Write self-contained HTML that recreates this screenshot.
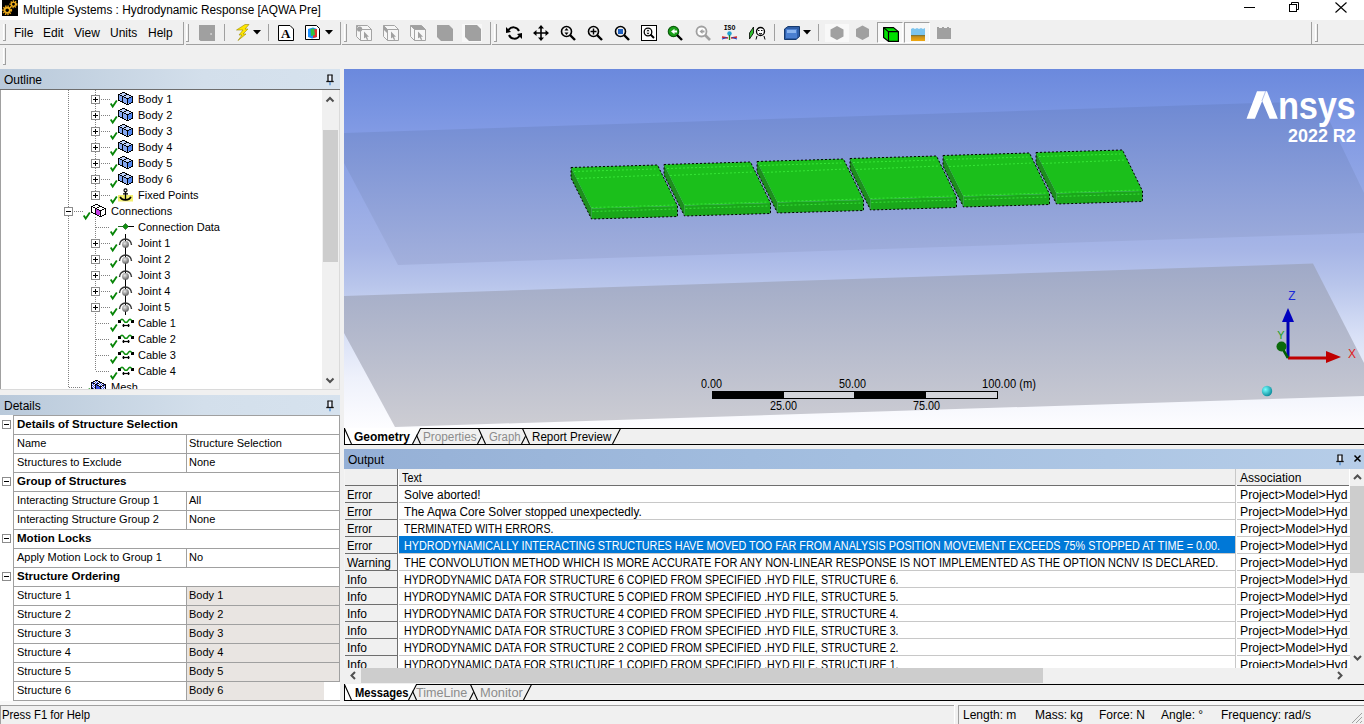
<!DOCTYPE html>
<html><head><meta charset="utf-8"><style>
*{margin:0;padding:0;box-sizing:border-box}
html,body{width:1364px;height:724px;overflow:hidden;background:#f0f0f0;font-family:"Liberation Sans",sans-serif;color:#000;position:relative}
.a{position:absolute}
.t{position:absolute;white-space:nowrap;line-height:1}
.s12{font-size:12px}
.s11{font-size:11px}
.b{font-weight:bold}
svg{position:absolute;overflow:visible}
</style></head><body>
<div class="a" style="left:0px;top:0px;width:1364px;height:20px;background:#fff"></div>
<svg style="left:2px;top:0px;" width="16" height="16" viewBox="0 0 16 16"><rect width="16" height="16" fill="#000"/><circle cx="5.2" cy="10.2" r="3.6" fill="none" stroke="#e8a317" stroke-width="2.70" stroke-dasharray="1.2 0.9"/><circle cx="5.2" cy="10.2" r="2.59" fill="none" stroke="#f0b020" stroke-width="1.62"/><circle cx="11.5" cy="4.3" r="2.9" fill="none" stroke="#e8a317" stroke-width="2.17" stroke-dasharray="1.2 0.9"/><circle cx="11.5" cy="4.3" r="2.09" fill="none" stroke="#f0b020" stroke-width="1.30"/></svg>
<div class="t" style="left:23px;top:4px;font-size:12px;color:#000;transform:scaleX(0.985);transform-origin:0 0">Multiple Systems : Hydrodynamic Response [AQWA Pre]</div>
<div class="a" style="left:1244px;top:7px;width:11px;height:1px;background:#000"></div>
<svg style="left:1289px;top:2px;" width="11" height="10" viewBox="0 0 11 10"><rect x="0.5" y="2.5" width="7" height="7" fill="none" stroke="#000"/><path d="M2.5 2.5V0.5H9.5V7.5H7.5" fill="none" stroke="#000"/></svg>
<svg style="left:1335px;top:2px;" width="12" height="11" viewBox="0 0 12 11"><path d="M0.5 0.5L11.5 10.5M11.5 0.5L0.5 10.5" stroke="#000" stroke-width="1.1"/></svg>
<div class="a" style="left:0px;top:20px;width:1364px;height:48px;background:#f0f0f0"></div>
<div class="a" style="left:0px;top:44px;width:183px;height:1px;background:#a0a0a0"></div>
<div class="a" style="left:186px;top:44px;width:155px;height:1px;background:#a0a0a0"></div>
<div class="a" style="left:342px;top:44px;width:149px;height:1px;background:#a0a0a0"></div>
<div class="a" style="left:492px;top:44px;width:819px;height:1px;background:#a0a0a0"></div>
<div class="a" style="left:1312px;top:44px;width:52px;height:1px;background:#a0a0a0"></div>
<div class="a" style="left:183px;top:22px;width:1px;height:23px;background:#a0a0a0"></div>
<div class="a" style="left:340px;top:22px;width:1px;height:23px;background:#a0a0a0"></div>
<div class="a" style="left:490px;top:22px;width:1px;height:23px;background:#a0a0a0"></div>
<div class="a" style="left:1311px;top:22px;width:1px;height:23px;background:#a0a0a0"></div>
<div class="a" style="left:3px;top:24px;width:1px;height:17px;background:#fff"></div>
<div class="a" style="left:5px;top:24px;width:1px;height:17px;background:#a0a0a0"></div>
<div class="a" style="left:3px;top:40px;width:3px;height:1px;background:#a0a0a0"></div>
<div class="a" style="left:186px;top:24px;width:1px;height:18px;background:#fff"></div>
<div class="a" style="left:188px;top:24px;width:1px;height:18px;background:#a0a0a0"></div>
<div class="a" style="left:186px;top:41px;width:3px;height:1px;background:#a0a0a0"></div>
<div class="a" style="left:344px;top:24px;width:1px;height:18px;background:#fff"></div>
<div class="a" style="left:346px;top:24px;width:1px;height:18px;background:#a0a0a0"></div>
<div class="a" style="left:344px;top:41px;width:3px;height:1px;background:#a0a0a0"></div>
<div class="a" style="left:494px;top:24px;width:1px;height:18px;background:#fff"></div>
<div class="a" style="left:496px;top:24px;width:1px;height:18px;background:#a0a0a0"></div>
<div class="a" style="left:494px;top:41px;width:3px;height:1px;background:#a0a0a0"></div>
<div class="a" style="left:1315px;top:24px;width:1px;height:18px;background:#fff"></div>
<div class="a" style="left:1317px;top:24px;width:1px;height:18px;background:#a0a0a0"></div>
<div class="a" style="left:1315px;top:41px;width:3px;height:1px;background:#a0a0a0"></div>
<div class="t" style="left:14px;top:27px;font-size:12px;">File</div>
<div class="t" style="left:43px;top:27px;font-size:12px;">Edit</div>
<div class="t" style="left:74px;top:27px;font-size:12px;">View</div>
<div class="t" style="left:110px;top:27px;font-size:12px;">Units</div>
<div class="t" style="left:148px;top:27px;font-size:12px;">Help</div>
<svg style="left:199px;top:25px;" width="16" height="16" viewBox="0 0 16 16"><path d="M0 0H16V16H1.5L0 14.5Z" fill="#a0a0a0"/><path d="M11 9l1.5-1v2z" fill="#fff"/></svg>
<div class="a" style="left:224px;top:24px;width:1px;height:17px;background:#a0a0a0"></div>
<svg style="left:236px;top:24px;" width="14" height="17" viewBox="0 0 14 17"><path d="M9 0.5L13 0.5L9 5L12 5L7 10L10 10L2 16.5L6 11L3 11L7 6L0.5 6Z" fill="#ffe600" stroke="#9a8a00" stroke-width="0.6"/></svg>
<svg style="left:253px;top:30px;" width="8" height="5" viewBox="0 0 8 5"><path d="M0 0H8L4 4.5Z" fill="#000"/></svg>
<div class="a" style="left:268px;top:24px;width:1px;height:17px;background:#a0a0a0"></div>
<svg style="left:278px;top:25px;" width="16" height="16" viewBox="0 0 16 16"><path d="M0.5 0.5H12L15.5 4V15.5H0.5Z" fill="#fff" stroke="#000"/><text x="7.8" y="13" font-family="Liberation Serif" font-size="13" text-anchor="middle" fill="#000" font-weight="bold">A</text></svg>
<svg style="left:305px;top:25px;" width="15" height="15" viewBox="0 0 15 15"><path d="M0.5 0.5H11.5L14.5 3.5V14.5H0.5Z" fill="#fff" stroke="#000"/><path d="M3 4L8 2.5L12 4V12L7 13.5L3 12Z" fill="#1e90ff"/><path d="M8 4.5L12 4V12L8 13Z" fill="#e03030"/><path d="M5.5 4L9 3.2L10 10L6 11Z" fill="#30c040"/></svg>
<svg style="left:325px;top:30px;" width="8" height="5" viewBox="0 0 8 5"><path d="M0 0H8L4 4.5Z" fill="#000"/></svg>
<svg style="left:356px;top:25px;" width="17" height="17" viewBox="0 0 17 17"><path d="M0.5 0.5H11.5L15.5 4.5V15.5H4.5L0.5 11.5Z" fill="#f6f6f6" stroke="#a4a4a4"/><circle cx="3.6" cy="4" r="2.6" fill="#a0a0a0"/><path d="M0.5 0.5L4.5 4.5H15.5M4.5 4.5V15.5" fill="none" stroke="#a4a4a4"/><path d="M8 6.5V13.5L9.6 12.2L11 15L12.2 14.4L10.9 11.7H13Z" fill="#a0a0a0"/></svg>
<svg style="left:383px;top:25px;" width="17" height="17" viewBox="0 0 17 17"><path d="M0.5 0.5H11.5L15.5 4.5V15.5H4.5L0.5 11.5Z" fill="#f6f6f6" stroke="#a4a4a4"/><path d="M0.5 0.5L4.5 4.5V8.5L0.5 4.5Z" fill="#a0a0a0"/><path d="M0.5 0.5L4.5 4.5H15.5M4.5 4.5V15.5" fill="none" stroke="#a4a4a4"/><path d="M8 6.5V13.5L9.6 12.2L11 15L12.2 14.4L10.9 11.7H13Z" fill="#a0a0a0"/></svg>
<svg style="left:410px;top:25px;" width="17" height="17" viewBox="0 0 17 17"><path d="M0.5 0.5H11.5L15.5 4.5V15.5H4.5L0.5 11.5Z" fill="#f6f6f6" stroke="#a4a4a4"/><path d="M0.5 0.5H11.5L15.5 4.5H4.5Z" fill="#a0a0a0"/><path d="M0.5 0.5L4.5 4.5H15.5M4.5 4.5V15.5" fill="none" stroke="#a4a4a4"/><path d="M8 6.5V13.5L9.6 12.2L11 15L12.2 14.4L10.9 11.7H13Z" fill="#a0a0a0"/></svg>
<svg style="left:437px;top:25px;" width="16" height="16" viewBox="0 0 16 16"><path d="M0 0H12L16 4V16H4L0 12Z" fill="#a0a0a0"/></svg>
<svg style="left:462px;top:24px;" width="20" height="18" viewBox="0 0 20 18"><rect width="20" height="18" fill="#f8f8f8"/><path d="M3 1H15L19 5V17H7L3 13Z" fill="#a0a0a0"/></svg>
<svg style="left:506px;top:25px;" width="16" height="16" viewBox="0 0 16 16"><path d="M13 6A6 6 0 0 0 2.5 5" fill="none" stroke="#000" stroke-width="2"/><path d="M0 2L5 7L0 8Z" fill="#000"/><path d="M3 10A6 6 0 0 0 13.5 11" fill="none" stroke="#000" stroke-width="2"/><path d="M16 14L11 9L16 8Z" fill="#000"/></svg>
<svg style="left:533px;top:25px;" width="16" height="16" viewBox="0 0 16 16"><path d="M8 1V15M1 8H15" stroke="#000" stroke-width="1.6"/><path d="M8 0L11 3.5H5ZM8 16L11 12.5H5ZM0 8L3.5 5V11ZM16 8L12.5 5V11Z" fill="#000"/></svg>
<svg style="left:560px;top:25px;" width="16" height="16" viewBox="0 0 16 16"><circle cx="6.5" cy="6.5" r="5" fill="none" stroke="#000" stroke-width="1.6"/><path d="M10 10L15 15" stroke="#000" stroke-width="2.4"/><path d="M6.5 3L8.5 5.5H4.5ZM6.5 10L8.5 7.5H4.5Z" fill="#000"/></svg>
<svg style="left:587px;top:25px;" width="16" height="16" viewBox="0 0 16 16"><circle cx="6.5" cy="6.5" r="5" fill="none" stroke="#000" stroke-width="1.6"/><path d="M10 10L15 15" stroke="#000" stroke-width="2.4"/><path d="M6.5 3.5V9.5M3.5 6.5H9.5" stroke="#000" stroke-width="1.4"/></svg>
<svg style="left:614px;top:25px;" width="16" height="16" viewBox="0 0 16 16"><circle cx="6.5" cy="6.5" r="5" fill="none" stroke="#000" stroke-width="1.6"/><path d="M10 10L15 15" stroke="#000" stroke-width="2.4"/><rect x="4" y="4" width="5" height="5" fill="#1e5fbf"/></svg>
<svg style="left:641px;top:25px;" width="16" height="16" viewBox="0 0 16 16"><rect x="0.5" y="0.5" width="15" height="15" fill="#fff" stroke="#000"/><circle cx="7" cy="7" r="3.8" fill="none" stroke="#000" stroke-width="1.3"/><path d="M9.5 9.5L13 13" stroke="#000" stroke-width="2"/><path d="M7 4.5L8.5 6.3H5.5ZM7 9.5L8.5 7.7H5.5Z" fill="#000"/></svg>
<svg style="left:667px;top:25px;" width="17" height="16" viewBox="0 0 17 16"><circle cx="6.5" cy="6.5" r="5.2" fill="#1aa01a" stroke="#0b5e0b" stroke-width="1.2"/><path d="M4 6.5L7.5 3.8V9.2Z M7 5.5H10V7.5H7Z" fill="#fff"/><path d="M10 10L15 15" stroke="#000" stroke-width="2.4"/></svg>
<svg style="left:695px;top:25px;" width="16" height="16" viewBox="0 0 16 16"><circle cx="6.5" cy="6.5" r="5" fill="#fff" stroke="#a0a0a0" stroke-width="1.8"/><path d="M10 10L15 15" stroke="#a0a0a0" stroke-width="2.6"/><path d="M4.5 6.5L7.5 4V9Z M7 5.5H9.5V7.5H7Z" fill="#a0a0a0"/></svg>
<svg style="left:721px;top:24px;" width="17" height="17" viewBox="0 0 17 17"><text x="8.5" y="6" font-family="Liberation Mono" font-size="6.5" font-weight="bold" text-anchor="middle" fill="#000">ISO</text><circle cx="8.5" cy="9.5" r="2.2" fill="#20a0d0"/><path d="M8.5 11V16" stroke="#208020" stroke-width="1.3"/><path d="M1 13L7 14M16 13L10 14" stroke="#d02020" stroke-width="1.3"/><path d="M1 15L6 13.5M16 15L11 13.5" stroke="#2040c0" stroke-width="1.1"/></svg>
<svg style="left:749px;top:26px;" width="17" height="14" viewBox="0 0 17 14"><path d="M0.5 13L0.5 7L4.5 1V7Z" fill="#30c030" stroke="#000" stroke-width="0.8"/><circle cx="11.5" cy="5.5" r="4" fill="#fff" stroke="#000" stroke-width="1.3"/><path d="M9 4.5h1.5M12 4.5h1.5M10 7.5q1.5 1 3 0M8 10L7 13.5M15 10L16 13.5" stroke="#000" stroke-width="1"/></svg>
<div class="a" style="left:774px;top:24px;width:1px;height:17px;background:#a0a0a0"></div>
<svg style="left:784px;top:26px;" width="16" height="14" viewBox="0 0 16 14"><path d="M0.5 3L4 0.5H15.5V10.5L12 13.5H0.5Z" fill="#2f5ea8" stroke="#153a70"/><path d="M2 3H13V12H2Z" fill="#4a7fd0"/><path d="M3 4H12V7H3Z" fill="#8ab4ee"/></svg>
<svg style="left:803px;top:30px;" width="8" height="5" viewBox="0 0 8 5"><path d="M0 0H8L4 4.5Z" fill="#000"/></svg>
<div class="a" style="left:818px;top:24px;width:1px;height:17px;background:#a0a0a0"></div>
<svg style="left:825px;top:24px;" width="24" height="18" viewBox="0 0 24 18"><rect width="24" height="18" fill="#f8f8f8"/><path d="M12 2L18.5 5.5V12.5L12 16L5.5 12.5V5.5Z" fill="#a0a0a0"/></svg>
<svg style="left:854px;top:24px;" width="17" height="18" viewBox="0 0 17 18"><path d="M8.5 1.5L15 5V12.5L8.5 16L2 12.5V5Z" fill="#a0a0a0"/></svg>
<div class="a" style="left:877px;top:22px;width:26px;height:21px;background:#f7f7f7;border:1px solid #a0a0a0;border-right-color:#fff;border-bottom-color:#fff"></div>
<svg style="left:883px;top:26px;" width="16" height="16" viewBox="0 0 16 16"><path d="M0.6 1.6H10.5L15.4 5.6V15.4H5.5L0.6 11.5Z" fill="#00e000" stroke="#000" stroke-width="1.2" stroke-linejoin="round"/><path d="M0.6 1.6L5.5 5.6H15.4M5.5 5.6V15.4" fill="none" stroke="#000" stroke-width="1.2"/></svg>
<div class="a" style="left:904px;top:22px;width:26px;height:21px;background:#f7f7f7;border:1px solid #a0a0a0;border-right-color:#fff;border-bottom-color:#fff"></div>
<svg style="left:911px;top:28px;" width="14" height="13" viewBox="0 0 14 13"><defs><linearGradient id="wg" x1="0" y1="0" x2="0" y2="1"><stop offset="0" stop-color="#6a6a3a"/><stop offset="0.3" stop-color="#c8901a"/><stop offset="1" stop-color="#f0a810"/></linearGradient></defs><path d="M0 1L2 0L4 1L6 0L8 1L10 0L12 1L14 0V7H0Z" fill="#7cc4ee"/><rect y="7" width="14" height="6" fill="url(#wg)"/></svg>
<svg style="left:937px;top:27px;" width="14" height="13" viewBox="0 0 14 13"><path d="M0 0H2V1H5V0H7V1H10V0H12V1H14V12H0Z" fill="#a0a0a0"/></svg>
<div class="a" style="left:3px;top:48px;width:1px;height:17px;background:#fff"></div>
<div class="a" style="left:5px;top:48px;width:1px;height:17px;background:#a0a0a0"></div>
<div class="a" style="left:3px;top:64px;width:3px;height:1px;background:#a0a0a0"></div>
<div class="a" style="left:0px;top:68px;width:1364px;height:1px;background:#f0f0f0"></div>
<div class="a" style="left:0px;top:69px;width:340px;height:20px;background:linear-gradient(to right,#b9c9da,#d3dfeb 60%,#d6e2ee)"></div>
<div class="t" style="left:4px;top:74px;font-size:12px;">Outline</div>
<svg style="left:326px;top:74px;" width="8" height="12" viewBox="0 0 8 12"><rect x="2" y="1" width="4" height="6" fill="#eef4ff"/><path d="M2 0.8V7M6 0.8V7" stroke="#111" stroke-width="1.3"/><path d="M1.5 1H6.5" stroke="#111" stroke-width="1"/><path d="M0.3 7.5H7.7" stroke="#111" stroke-width="1.3"/><path d="M4 8V11.2" stroke="#4a8ad0" stroke-width="1.3"/></svg>
<div class="a" style="left:0px;top:89px;width:340px;height:1px;background:#6e6e6e"></div>
<div class="a" style="left:0px;top:90px;width:340px;height:300px;background:#fff"></div>
<div class="a" style="left:0px;top:90px;width:1px;height:300px;background:#a0a0a0"></div>
<div class="a" style="left:0px;top:389px;width:340px;height:1px;background:#dadada"></div>
<div class="a" style="left:339px;top:90px;width:1px;height:300px;background:#dadada"></div>
<div class="a" style="left:322px;top:90px;width:17px;height:299px;background:#f0f0f0"></div>
<div class="a" style="left:323px;top:130px;width:15px;height:132px;background:#cdcdcd"></div>
<svg style="left:325px;top:96px;" width="10" height="7" viewBox="0 0 10 7"><path d="M1.5 5.5L5 2L8.5 5.5" fill="none" stroke="#505050" stroke-width="2"/></svg>
<svg style="left:325px;top:377px;" width="10" height="7" viewBox="0 0 10 7"><path d="M1.5 1.5L5 5L8.5 1.5" fill="none" stroke="#505050" stroke-width="2"/></svg>
<div class="a" style="left:1px;top:90px;width:321px;height:299px;overflow:hidden">
<div class="a" style="left:67px;top:0px;width:1px;height:298px;background:repeating-linear-gradient(to bottom,#808080 0 1px,transparent 1px 2px)"></div>
<div class="a" style="left:94px;top:0px;width:1px;height:105px;background:repeating-linear-gradient(to bottom,#808080 0 1px,transparent 1px 2px)"></div>
<div class="a" style="left:94px;top:127px;width:1px;height:154px;background:repeating-linear-gradient(to bottom,#808080 0 1px,transparent 1px 2px)"></div>
<svg style="left:124px;top:144px" width="1" height="81" viewBox="0 0 1 81"><rect width="1" height="81" fill="#000"/></svg>
<svg style="left:90px;top:5px" width="9" height="9" viewBox="0 0 9 9"><rect x="0.5" y="0.5" width="8" height="8" fill="#fff" stroke="#8c8c8c"/><path d="M2 4.5H7" stroke="#000"/><path d="M4.5 2V7" stroke="#000"/></svg>
<div class="a" style="left:100px;top:9px;width:9px;height:1px;background:repeating-linear-gradient(to right,#808080 0 1px,transparent 1px 2px)"></div>
<svg style="left:109px;top:10px" width="8" height="8" viewBox="0 0 8 8"><path d="M0.7 3.6L2.7 6.6L6.8 0.6" fill="none" stroke="#078507" stroke-width="1.8"/></svg>
<svg style="left:116px;top:1px" width="16" height="14" viewBox="0 0 16 14"><g shape-rendering="crispEdges"><rect x="5" y="1" width="3" height="1" fill="#000"/><rect x="3" y="2" width="2" height="1" fill="#000"/><rect x="5" y="2" width="3" height="1" fill="#bdd1fb"/><rect x="8" y="2" width="2" height="1" fill="#000"/><rect x="1" y="3" width="2" height="1" fill="#000"/><rect x="3" y="3" width="6" height="1" fill="#bdd1fb"/><rect x="9" y="3" width="3" height="1" fill="#000"/><rect x="1" y="4" width="1" height="1" fill="#000"/><rect x="2" y="4" width="1" height="1" fill="#87a9f3"/><rect x="3" y="4" width="2" height="1" fill="#000"/><rect x="5" y="4" width="2" height="1" fill="#bdd1fb"/><rect x="7" y="4" width="2" height="1" fill="#000"/><rect x="9" y="4" width="3" height="1" fill="#bdd1fb"/><rect x="12" y="4" width="2" height="1" fill="#000"/><rect x="1" y="5" width="1" height="1" fill="#000"/><rect x="2" y="5" width="3" height="1" fill="#87a9f3"/><rect x="5" y="5" width="2" height="1" fill="#000"/><rect x="7" y="5" width="7" height="1" fill="#bdd1fb"/><rect x="14" y="5" width="2" height="1" fill="#000"/><rect x="1" y="6" width="1" height="1" fill="#000"/><rect x="2" y="6" width="3" height="1" fill="#87a9f3"/><rect x="5" y="6" width="1" height="1" fill="#000"/><rect x="6" y="6" width="1" height="1" fill="#87a9f3"/><rect x="7" y="6" width="2" height="1" fill="#000"/><rect x="9" y="6" width="3" height="1" fill="#bdd1fb"/><rect x="12" y="6" width="2" height="1" fill="#000"/><rect x="14" y="6" width="1" height="1" fill="#5288f4"/><rect x="15" y="6" width="1" height="1" fill="#000"/><rect x="1" y="7" width="1" height="1" fill="#000"/><rect x="2" y="7" width="3" height="1" fill="#87a9f3"/><rect x="5" y="7" width="1" height="1" fill="#000"/><rect x="6" y="7" width="3" height="1" fill="#87a9f3"/><rect x="9" y="7" width="3" height="1" fill="#000"/><rect x="12" y="7" width="3" height="1" fill="#5288f4"/><rect x="15" y="7" width="1" height="1" fill="#000"/><rect x="1" y="8" width="1" height="1" fill="#000"/><rect x="2" y="8" width="3" height="1" fill="#87a9f3"/><rect x="5" y="8" width="1" height="1" fill="#000"/><rect x="6" y="8" width="4" height="1" fill="#87a9f3"/><rect x="10" y="8" width="1" height="1" fill="#000"/><rect x="11" y="8" width="4" height="1" fill="#5288f4"/><rect x="15" y="8" width="1" height="1" fill="#000"/><rect x="1" y="9" width="2" height="1" fill="#000"/><rect x="3" y="9" width="2" height="1" fill="#87a9f3"/><rect x="5" y="9" width="1" height="1" fill="#000"/><rect x="6" y="9" width="4" height="1" fill="#87a9f3"/><rect x="10" y="9" width="1" height="1" fill="#000"/><rect x="11" y="9" width="4" height="1" fill="#5288f4"/><rect x="15" y="9" width="1" height="1" fill="#000"/><rect x="3" y="10" width="3" height="1" fill="#000"/><rect x="6" y="10" width="4" height="1" fill="#87a9f3"/><rect x="10" y="10" width="1" height="1" fill="#000"/><rect x="11" y="10" width="4" height="1" fill="#5288f4"/><rect x="15" y="10" width="1" height="1" fill="#000"/><rect x="5" y="11" width="2" height="1" fill="#000"/><rect x="7" y="11" width="3" height="1" fill="#87a9f3"/><rect x="10" y="11" width="1" height="1" fill="#000"/><rect x="11" y="11" width="3" height="1" fill="#5288f4"/><rect x="14" y="11" width="2" height="1" fill="#000"/><rect x="7" y="12" width="2" height="1" fill="#000"/><rect x="9" y="12" width="1" height="1" fill="#bdd1fb"/><rect x="10" y="12" width="1" height="1" fill="#000"/><rect x="11" y="12" width="1" height="1" fill="#bdd1fb"/><rect x="12" y="12" width="2" height="1" fill="#000"/><rect x="9" y="13" width="3" height="1" fill="#000"/></g></svg>
<div class="t" style="left:137px;top:4px;font-size:11px">Body 1</div>
<svg style="left:90px;top:21px" width="9" height="9" viewBox="0 0 9 9"><rect x="0.5" y="0.5" width="8" height="8" fill="#fff" stroke="#8c8c8c"/><path d="M2 4.5H7" stroke="#000"/><path d="M4.5 2V7" stroke="#000"/></svg>
<div class="a" style="left:100px;top:25px;width:9px;height:1px;background:repeating-linear-gradient(to right,#808080 0 1px,transparent 1px 2px)"></div>
<svg style="left:109px;top:26px" width="8" height="8" viewBox="0 0 8 8"><path d="M0.7 3.6L2.7 6.6L6.8 0.6" fill="none" stroke="#078507" stroke-width="1.8"/></svg>
<svg style="left:116px;top:17px" width="16" height="14" viewBox="0 0 16 14"><g shape-rendering="crispEdges"><rect x="5" y="1" width="3" height="1" fill="#000"/><rect x="3" y="2" width="2" height="1" fill="#000"/><rect x="5" y="2" width="3" height="1" fill="#bdd1fb"/><rect x="8" y="2" width="2" height="1" fill="#000"/><rect x="1" y="3" width="2" height="1" fill="#000"/><rect x="3" y="3" width="6" height="1" fill="#bdd1fb"/><rect x="9" y="3" width="3" height="1" fill="#000"/><rect x="1" y="4" width="1" height="1" fill="#000"/><rect x="2" y="4" width="1" height="1" fill="#87a9f3"/><rect x="3" y="4" width="2" height="1" fill="#000"/><rect x="5" y="4" width="2" height="1" fill="#bdd1fb"/><rect x="7" y="4" width="2" height="1" fill="#000"/><rect x="9" y="4" width="3" height="1" fill="#bdd1fb"/><rect x="12" y="4" width="2" height="1" fill="#000"/><rect x="1" y="5" width="1" height="1" fill="#000"/><rect x="2" y="5" width="3" height="1" fill="#87a9f3"/><rect x="5" y="5" width="2" height="1" fill="#000"/><rect x="7" y="5" width="7" height="1" fill="#bdd1fb"/><rect x="14" y="5" width="2" height="1" fill="#000"/><rect x="1" y="6" width="1" height="1" fill="#000"/><rect x="2" y="6" width="3" height="1" fill="#87a9f3"/><rect x="5" y="6" width="1" height="1" fill="#000"/><rect x="6" y="6" width="1" height="1" fill="#87a9f3"/><rect x="7" y="6" width="2" height="1" fill="#000"/><rect x="9" y="6" width="3" height="1" fill="#bdd1fb"/><rect x="12" y="6" width="2" height="1" fill="#000"/><rect x="14" y="6" width="1" height="1" fill="#5288f4"/><rect x="15" y="6" width="1" height="1" fill="#000"/><rect x="1" y="7" width="1" height="1" fill="#000"/><rect x="2" y="7" width="3" height="1" fill="#87a9f3"/><rect x="5" y="7" width="1" height="1" fill="#000"/><rect x="6" y="7" width="3" height="1" fill="#87a9f3"/><rect x="9" y="7" width="3" height="1" fill="#000"/><rect x="12" y="7" width="3" height="1" fill="#5288f4"/><rect x="15" y="7" width="1" height="1" fill="#000"/><rect x="1" y="8" width="1" height="1" fill="#000"/><rect x="2" y="8" width="3" height="1" fill="#87a9f3"/><rect x="5" y="8" width="1" height="1" fill="#000"/><rect x="6" y="8" width="4" height="1" fill="#87a9f3"/><rect x="10" y="8" width="1" height="1" fill="#000"/><rect x="11" y="8" width="4" height="1" fill="#5288f4"/><rect x="15" y="8" width="1" height="1" fill="#000"/><rect x="1" y="9" width="2" height="1" fill="#000"/><rect x="3" y="9" width="2" height="1" fill="#87a9f3"/><rect x="5" y="9" width="1" height="1" fill="#000"/><rect x="6" y="9" width="4" height="1" fill="#87a9f3"/><rect x="10" y="9" width="1" height="1" fill="#000"/><rect x="11" y="9" width="4" height="1" fill="#5288f4"/><rect x="15" y="9" width="1" height="1" fill="#000"/><rect x="3" y="10" width="3" height="1" fill="#000"/><rect x="6" y="10" width="4" height="1" fill="#87a9f3"/><rect x="10" y="10" width="1" height="1" fill="#000"/><rect x="11" y="10" width="4" height="1" fill="#5288f4"/><rect x="15" y="10" width="1" height="1" fill="#000"/><rect x="5" y="11" width="2" height="1" fill="#000"/><rect x="7" y="11" width="3" height="1" fill="#87a9f3"/><rect x="10" y="11" width="1" height="1" fill="#000"/><rect x="11" y="11" width="3" height="1" fill="#5288f4"/><rect x="14" y="11" width="2" height="1" fill="#000"/><rect x="7" y="12" width="2" height="1" fill="#000"/><rect x="9" y="12" width="1" height="1" fill="#bdd1fb"/><rect x="10" y="12" width="1" height="1" fill="#000"/><rect x="11" y="12" width="1" height="1" fill="#bdd1fb"/><rect x="12" y="12" width="2" height="1" fill="#000"/><rect x="9" y="13" width="3" height="1" fill="#000"/></g></svg>
<div class="t" style="left:137px;top:20px;font-size:11px">Body 2</div>
<svg style="left:90px;top:37px" width="9" height="9" viewBox="0 0 9 9"><rect x="0.5" y="0.5" width="8" height="8" fill="#fff" stroke="#8c8c8c"/><path d="M2 4.5H7" stroke="#000"/><path d="M4.5 2V7" stroke="#000"/></svg>
<div class="a" style="left:100px;top:41px;width:9px;height:1px;background:repeating-linear-gradient(to right,#808080 0 1px,transparent 1px 2px)"></div>
<svg style="left:109px;top:42px" width="8" height="8" viewBox="0 0 8 8"><path d="M0.7 3.6L2.7 6.6L6.8 0.6" fill="none" stroke="#078507" stroke-width="1.8"/></svg>
<svg style="left:116px;top:33px" width="16" height="14" viewBox="0 0 16 14"><g shape-rendering="crispEdges"><rect x="5" y="1" width="3" height="1" fill="#000"/><rect x="3" y="2" width="2" height="1" fill="#000"/><rect x="5" y="2" width="3" height="1" fill="#bdd1fb"/><rect x="8" y="2" width="2" height="1" fill="#000"/><rect x="1" y="3" width="2" height="1" fill="#000"/><rect x="3" y="3" width="6" height="1" fill="#bdd1fb"/><rect x="9" y="3" width="3" height="1" fill="#000"/><rect x="1" y="4" width="1" height="1" fill="#000"/><rect x="2" y="4" width="1" height="1" fill="#87a9f3"/><rect x="3" y="4" width="2" height="1" fill="#000"/><rect x="5" y="4" width="2" height="1" fill="#bdd1fb"/><rect x="7" y="4" width="2" height="1" fill="#000"/><rect x="9" y="4" width="3" height="1" fill="#bdd1fb"/><rect x="12" y="4" width="2" height="1" fill="#000"/><rect x="1" y="5" width="1" height="1" fill="#000"/><rect x="2" y="5" width="3" height="1" fill="#87a9f3"/><rect x="5" y="5" width="2" height="1" fill="#000"/><rect x="7" y="5" width="7" height="1" fill="#bdd1fb"/><rect x="14" y="5" width="2" height="1" fill="#000"/><rect x="1" y="6" width="1" height="1" fill="#000"/><rect x="2" y="6" width="3" height="1" fill="#87a9f3"/><rect x="5" y="6" width="1" height="1" fill="#000"/><rect x="6" y="6" width="1" height="1" fill="#87a9f3"/><rect x="7" y="6" width="2" height="1" fill="#000"/><rect x="9" y="6" width="3" height="1" fill="#bdd1fb"/><rect x="12" y="6" width="2" height="1" fill="#000"/><rect x="14" y="6" width="1" height="1" fill="#5288f4"/><rect x="15" y="6" width="1" height="1" fill="#000"/><rect x="1" y="7" width="1" height="1" fill="#000"/><rect x="2" y="7" width="3" height="1" fill="#87a9f3"/><rect x="5" y="7" width="1" height="1" fill="#000"/><rect x="6" y="7" width="3" height="1" fill="#87a9f3"/><rect x="9" y="7" width="3" height="1" fill="#000"/><rect x="12" y="7" width="3" height="1" fill="#5288f4"/><rect x="15" y="7" width="1" height="1" fill="#000"/><rect x="1" y="8" width="1" height="1" fill="#000"/><rect x="2" y="8" width="3" height="1" fill="#87a9f3"/><rect x="5" y="8" width="1" height="1" fill="#000"/><rect x="6" y="8" width="4" height="1" fill="#87a9f3"/><rect x="10" y="8" width="1" height="1" fill="#000"/><rect x="11" y="8" width="4" height="1" fill="#5288f4"/><rect x="15" y="8" width="1" height="1" fill="#000"/><rect x="1" y="9" width="2" height="1" fill="#000"/><rect x="3" y="9" width="2" height="1" fill="#87a9f3"/><rect x="5" y="9" width="1" height="1" fill="#000"/><rect x="6" y="9" width="4" height="1" fill="#87a9f3"/><rect x="10" y="9" width="1" height="1" fill="#000"/><rect x="11" y="9" width="4" height="1" fill="#5288f4"/><rect x="15" y="9" width="1" height="1" fill="#000"/><rect x="3" y="10" width="3" height="1" fill="#000"/><rect x="6" y="10" width="4" height="1" fill="#87a9f3"/><rect x="10" y="10" width="1" height="1" fill="#000"/><rect x="11" y="10" width="4" height="1" fill="#5288f4"/><rect x="15" y="10" width="1" height="1" fill="#000"/><rect x="5" y="11" width="2" height="1" fill="#000"/><rect x="7" y="11" width="3" height="1" fill="#87a9f3"/><rect x="10" y="11" width="1" height="1" fill="#000"/><rect x="11" y="11" width="3" height="1" fill="#5288f4"/><rect x="14" y="11" width="2" height="1" fill="#000"/><rect x="7" y="12" width="2" height="1" fill="#000"/><rect x="9" y="12" width="1" height="1" fill="#bdd1fb"/><rect x="10" y="12" width="1" height="1" fill="#000"/><rect x="11" y="12" width="1" height="1" fill="#bdd1fb"/><rect x="12" y="12" width="2" height="1" fill="#000"/><rect x="9" y="13" width="3" height="1" fill="#000"/></g></svg>
<div class="t" style="left:137px;top:36px;font-size:11px">Body 3</div>
<svg style="left:90px;top:53px" width="9" height="9" viewBox="0 0 9 9"><rect x="0.5" y="0.5" width="8" height="8" fill="#fff" stroke="#8c8c8c"/><path d="M2 4.5H7" stroke="#000"/><path d="M4.5 2V7" stroke="#000"/></svg>
<div class="a" style="left:100px;top:57px;width:9px;height:1px;background:repeating-linear-gradient(to right,#808080 0 1px,transparent 1px 2px)"></div>
<svg style="left:109px;top:58px" width="8" height="8" viewBox="0 0 8 8"><path d="M0.7 3.6L2.7 6.6L6.8 0.6" fill="none" stroke="#078507" stroke-width="1.8"/></svg>
<svg style="left:116px;top:49px" width="16" height="14" viewBox="0 0 16 14"><g shape-rendering="crispEdges"><rect x="5" y="1" width="3" height="1" fill="#000"/><rect x="3" y="2" width="2" height="1" fill="#000"/><rect x="5" y="2" width="3" height="1" fill="#bdd1fb"/><rect x="8" y="2" width="2" height="1" fill="#000"/><rect x="1" y="3" width="2" height="1" fill="#000"/><rect x="3" y="3" width="6" height="1" fill="#bdd1fb"/><rect x="9" y="3" width="3" height="1" fill="#000"/><rect x="1" y="4" width="1" height="1" fill="#000"/><rect x="2" y="4" width="1" height="1" fill="#87a9f3"/><rect x="3" y="4" width="2" height="1" fill="#000"/><rect x="5" y="4" width="2" height="1" fill="#bdd1fb"/><rect x="7" y="4" width="2" height="1" fill="#000"/><rect x="9" y="4" width="3" height="1" fill="#bdd1fb"/><rect x="12" y="4" width="2" height="1" fill="#000"/><rect x="1" y="5" width="1" height="1" fill="#000"/><rect x="2" y="5" width="3" height="1" fill="#87a9f3"/><rect x="5" y="5" width="2" height="1" fill="#000"/><rect x="7" y="5" width="7" height="1" fill="#bdd1fb"/><rect x="14" y="5" width="2" height="1" fill="#000"/><rect x="1" y="6" width="1" height="1" fill="#000"/><rect x="2" y="6" width="3" height="1" fill="#87a9f3"/><rect x="5" y="6" width="1" height="1" fill="#000"/><rect x="6" y="6" width="1" height="1" fill="#87a9f3"/><rect x="7" y="6" width="2" height="1" fill="#000"/><rect x="9" y="6" width="3" height="1" fill="#bdd1fb"/><rect x="12" y="6" width="2" height="1" fill="#000"/><rect x="14" y="6" width="1" height="1" fill="#5288f4"/><rect x="15" y="6" width="1" height="1" fill="#000"/><rect x="1" y="7" width="1" height="1" fill="#000"/><rect x="2" y="7" width="3" height="1" fill="#87a9f3"/><rect x="5" y="7" width="1" height="1" fill="#000"/><rect x="6" y="7" width="3" height="1" fill="#87a9f3"/><rect x="9" y="7" width="3" height="1" fill="#000"/><rect x="12" y="7" width="3" height="1" fill="#5288f4"/><rect x="15" y="7" width="1" height="1" fill="#000"/><rect x="1" y="8" width="1" height="1" fill="#000"/><rect x="2" y="8" width="3" height="1" fill="#87a9f3"/><rect x="5" y="8" width="1" height="1" fill="#000"/><rect x="6" y="8" width="4" height="1" fill="#87a9f3"/><rect x="10" y="8" width="1" height="1" fill="#000"/><rect x="11" y="8" width="4" height="1" fill="#5288f4"/><rect x="15" y="8" width="1" height="1" fill="#000"/><rect x="1" y="9" width="2" height="1" fill="#000"/><rect x="3" y="9" width="2" height="1" fill="#87a9f3"/><rect x="5" y="9" width="1" height="1" fill="#000"/><rect x="6" y="9" width="4" height="1" fill="#87a9f3"/><rect x="10" y="9" width="1" height="1" fill="#000"/><rect x="11" y="9" width="4" height="1" fill="#5288f4"/><rect x="15" y="9" width="1" height="1" fill="#000"/><rect x="3" y="10" width="3" height="1" fill="#000"/><rect x="6" y="10" width="4" height="1" fill="#87a9f3"/><rect x="10" y="10" width="1" height="1" fill="#000"/><rect x="11" y="10" width="4" height="1" fill="#5288f4"/><rect x="15" y="10" width="1" height="1" fill="#000"/><rect x="5" y="11" width="2" height="1" fill="#000"/><rect x="7" y="11" width="3" height="1" fill="#87a9f3"/><rect x="10" y="11" width="1" height="1" fill="#000"/><rect x="11" y="11" width="3" height="1" fill="#5288f4"/><rect x="14" y="11" width="2" height="1" fill="#000"/><rect x="7" y="12" width="2" height="1" fill="#000"/><rect x="9" y="12" width="1" height="1" fill="#bdd1fb"/><rect x="10" y="12" width="1" height="1" fill="#000"/><rect x="11" y="12" width="1" height="1" fill="#bdd1fb"/><rect x="12" y="12" width="2" height="1" fill="#000"/><rect x="9" y="13" width="3" height="1" fill="#000"/></g></svg>
<div class="t" style="left:137px;top:52px;font-size:11px">Body 4</div>
<svg style="left:90px;top:69px" width="9" height="9" viewBox="0 0 9 9"><rect x="0.5" y="0.5" width="8" height="8" fill="#fff" stroke="#8c8c8c"/><path d="M2 4.5H7" stroke="#000"/><path d="M4.5 2V7" stroke="#000"/></svg>
<div class="a" style="left:100px;top:73px;width:9px;height:1px;background:repeating-linear-gradient(to right,#808080 0 1px,transparent 1px 2px)"></div>
<svg style="left:109px;top:74px" width="8" height="8" viewBox="0 0 8 8"><path d="M0.7 3.6L2.7 6.6L6.8 0.6" fill="none" stroke="#078507" stroke-width="1.8"/></svg>
<svg style="left:116px;top:65px" width="16" height="14" viewBox="0 0 16 14"><g shape-rendering="crispEdges"><rect x="5" y="1" width="3" height="1" fill="#000"/><rect x="3" y="2" width="2" height="1" fill="#000"/><rect x="5" y="2" width="3" height="1" fill="#bdd1fb"/><rect x="8" y="2" width="2" height="1" fill="#000"/><rect x="1" y="3" width="2" height="1" fill="#000"/><rect x="3" y="3" width="6" height="1" fill="#bdd1fb"/><rect x="9" y="3" width="3" height="1" fill="#000"/><rect x="1" y="4" width="1" height="1" fill="#000"/><rect x="2" y="4" width="1" height="1" fill="#87a9f3"/><rect x="3" y="4" width="2" height="1" fill="#000"/><rect x="5" y="4" width="2" height="1" fill="#bdd1fb"/><rect x="7" y="4" width="2" height="1" fill="#000"/><rect x="9" y="4" width="3" height="1" fill="#bdd1fb"/><rect x="12" y="4" width="2" height="1" fill="#000"/><rect x="1" y="5" width="1" height="1" fill="#000"/><rect x="2" y="5" width="3" height="1" fill="#87a9f3"/><rect x="5" y="5" width="2" height="1" fill="#000"/><rect x="7" y="5" width="7" height="1" fill="#bdd1fb"/><rect x="14" y="5" width="2" height="1" fill="#000"/><rect x="1" y="6" width="1" height="1" fill="#000"/><rect x="2" y="6" width="3" height="1" fill="#87a9f3"/><rect x="5" y="6" width="1" height="1" fill="#000"/><rect x="6" y="6" width="1" height="1" fill="#87a9f3"/><rect x="7" y="6" width="2" height="1" fill="#000"/><rect x="9" y="6" width="3" height="1" fill="#bdd1fb"/><rect x="12" y="6" width="2" height="1" fill="#000"/><rect x="14" y="6" width="1" height="1" fill="#5288f4"/><rect x="15" y="6" width="1" height="1" fill="#000"/><rect x="1" y="7" width="1" height="1" fill="#000"/><rect x="2" y="7" width="3" height="1" fill="#87a9f3"/><rect x="5" y="7" width="1" height="1" fill="#000"/><rect x="6" y="7" width="3" height="1" fill="#87a9f3"/><rect x="9" y="7" width="3" height="1" fill="#000"/><rect x="12" y="7" width="3" height="1" fill="#5288f4"/><rect x="15" y="7" width="1" height="1" fill="#000"/><rect x="1" y="8" width="1" height="1" fill="#000"/><rect x="2" y="8" width="3" height="1" fill="#87a9f3"/><rect x="5" y="8" width="1" height="1" fill="#000"/><rect x="6" y="8" width="4" height="1" fill="#87a9f3"/><rect x="10" y="8" width="1" height="1" fill="#000"/><rect x="11" y="8" width="4" height="1" fill="#5288f4"/><rect x="15" y="8" width="1" height="1" fill="#000"/><rect x="1" y="9" width="2" height="1" fill="#000"/><rect x="3" y="9" width="2" height="1" fill="#87a9f3"/><rect x="5" y="9" width="1" height="1" fill="#000"/><rect x="6" y="9" width="4" height="1" fill="#87a9f3"/><rect x="10" y="9" width="1" height="1" fill="#000"/><rect x="11" y="9" width="4" height="1" fill="#5288f4"/><rect x="15" y="9" width="1" height="1" fill="#000"/><rect x="3" y="10" width="3" height="1" fill="#000"/><rect x="6" y="10" width="4" height="1" fill="#87a9f3"/><rect x="10" y="10" width="1" height="1" fill="#000"/><rect x="11" y="10" width="4" height="1" fill="#5288f4"/><rect x="15" y="10" width="1" height="1" fill="#000"/><rect x="5" y="11" width="2" height="1" fill="#000"/><rect x="7" y="11" width="3" height="1" fill="#87a9f3"/><rect x="10" y="11" width="1" height="1" fill="#000"/><rect x="11" y="11" width="3" height="1" fill="#5288f4"/><rect x="14" y="11" width="2" height="1" fill="#000"/><rect x="7" y="12" width="2" height="1" fill="#000"/><rect x="9" y="12" width="1" height="1" fill="#bdd1fb"/><rect x="10" y="12" width="1" height="1" fill="#000"/><rect x="11" y="12" width="1" height="1" fill="#bdd1fb"/><rect x="12" y="12" width="2" height="1" fill="#000"/><rect x="9" y="13" width="3" height="1" fill="#000"/></g></svg>
<div class="t" style="left:137px;top:68px;font-size:11px">Body 5</div>
<svg style="left:90px;top:85px" width="9" height="9" viewBox="0 0 9 9"><rect x="0.5" y="0.5" width="8" height="8" fill="#fff" stroke="#8c8c8c"/><path d="M2 4.5H7" stroke="#000"/><path d="M4.5 2V7" stroke="#000"/></svg>
<div class="a" style="left:100px;top:89px;width:9px;height:1px;background:repeating-linear-gradient(to right,#808080 0 1px,transparent 1px 2px)"></div>
<svg style="left:109px;top:90px" width="8" height="8" viewBox="0 0 8 8"><path d="M0.7 3.6L2.7 6.6L6.8 0.6" fill="none" stroke="#078507" stroke-width="1.8"/></svg>
<svg style="left:116px;top:81px" width="16" height="14" viewBox="0 0 16 14"><g shape-rendering="crispEdges"><rect x="5" y="1" width="3" height="1" fill="#000"/><rect x="3" y="2" width="2" height="1" fill="#000"/><rect x="5" y="2" width="3" height="1" fill="#bdd1fb"/><rect x="8" y="2" width="2" height="1" fill="#000"/><rect x="1" y="3" width="2" height="1" fill="#000"/><rect x="3" y="3" width="6" height="1" fill="#bdd1fb"/><rect x="9" y="3" width="3" height="1" fill="#000"/><rect x="1" y="4" width="1" height="1" fill="#000"/><rect x="2" y="4" width="1" height="1" fill="#87a9f3"/><rect x="3" y="4" width="2" height="1" fill="#000"/><rect x="5" y="4" width="2" height="1" fill="#bdd1fb"/><rect x="7" y="4" width="2" height="1" fill="#000"/><rect x="9" y="4" width="3" height="1" fill="#bdd1fb"/><rect x="12" y="4" width="2" height="1" fill="#000"/><rect x="1" y="5" width="1" height="1" fill="#000"/><rect x="2" y="5" width="3" height="1" fill="#87a9f3"/><rect x="5" y="5" width="2" height="1" fill="#000"/><rect x="7" y="5" width="7" height="1" fill="#bdd1fb"/><rect x="14" y="5" width="2" height="1" fill="#000"/><rect x="1" y="6" width="1" height="1" fill="#000"/><rect x="2" y="6" width="3" height="1" fill="#87a9f3"/><rect x="5" y="6" width="1" height="1" fill="#000"/><rect x="6" y="6" width="1" height="1" fill="#87a9f3"/><rect x="7" y="6" width="2" height="1" fill="#000"/><rect x="9" y="6" width="3" height="1" fill="#bdd1fb"/><rect x="12" y="6" width="2" height="1" fill="#000"/><rect x="14" y="6" width="1" height="1" fill="#5288f4"/><rect x="15" y="6" width="1" height="1" fill="#000"/><rect x="1" y="7" width="1" height="1" fill="#000"/><rect x="2" y="7" width="3" height="1" fill="#87a9f3"/><rect x="5" y="7" width="1" height="1" fill="#000"/><rect x="6" y="7" width="3" height="1" fill="#87a9f3"/><rect x="9" y="7" width="3" height="1" fill="#000"/><rect x="12" y="7" width="3" height="1" fill="#5288f4"/><rect x="15" y="7" width="1" height="1" fill="#000"/><rect x="1" y="8" width="1" height="1" fill="#000"/><rect x="2" y="8" width="3" height="1" fill="#87a9f3"/><rect x="5" y="8" width="1" height="1" fill="#000"/><rect x="6" y="8" width="4" height="1" fill="#87a9f3"/><rect x="10" y="8" width="1" height="1" fill="#000"/><rect x="11" y="8" width="4" height="1" fill="#5288f4"/><rect x="15" y="8" width="1" height="1" fill="#000"/><rect x="1" y="9" width="2" height="1" fill="#000"/><rect x="3" y="9" width="2" height="1" fill="#87a9f3"/><rect x="5" y="9" width="1" height="1" fill="#000"/><rect x="6" y="9" width="4" height="1" fill="#87a9f3"/><rect x="10" y="9" width="1" height="1" fill="#000"/><rect x="11" y="9" width="4" height="1" fill="#5288f4"/><rect x="15" y="9" width="1" height="1" fill="#000"/><rect x="3" y="10" width="3" height="1" fill="#000"/><rect x="6" y="10" width="4" height="1" fill="#87a9f3"/><rect x="10" y="10" width="1" height="1" fill="#000"/><rect x="11" y="10" width="4" height="1" fill="#5288f4"/><rect x="15" y="10" width="1" height="1" fill="#000"/><rect x="5" y="11" width="2" height="1" fill="#000"/><rect x="7" y="11" width="3" height="1" fill="#87a9f3"/><rect x="10" y="11" width="1" height="1" fill="#000"/><rect x="11" y="11" width="3" height="1" fill="#5288f4"/><rect x="14" y="11" width="2" height="1" fill="#000"/><rect x="7" y="12" width="2" height="1" fill="#000"/><rect x="9" y="12" width="1" height="1" fill="#bdd1fb"/><rect x="10" y="12" width="1" height="1" fill="#000"/><rect x="11" y="12" width="1" height="1" fill="#bdd1fb"/><rect x="12" y="12" width="2" height="1" fill="#000"/><rect x="9" y="13" width="3" height="1" fill="#000"/></g></svg>
<div class="t" style="left:137px;top:84px;font-size:11px">Body 6</div>
<svg style="left:90px;top:101px" width="9" height="9" viewBox="0 0 9 9"><rect x="0.5" y="0.5" width="8" height="8" fill="#fff" stroke="#8c8c8c"/><path d="M2 4.5H7" stroke="#000"/><path d="M4.5 2V7" stroke="#000"/></svg>
<div class="a" style="left:100px;top:105px;width:9px;height:1px;background:repeating-linear-gradient(to right,#808080 0 1px,transparent 1px 2px)"></div>
<svg style="left:109px;top:106px" width="8" height="8" viewBox="0 0 8 8"><path d="M0.7 3.6L2.7 6.6L6.8 0.6" fill="none" stroke="#078507" stroke-width="1.8"/></svg>
<svg style="left:117px;top:97px" width="15" height="16" viewBox="0 0 15 16"><rect x="0" y="8" width="15" height="6.5" fill="#f3ef6e"/><circle cx="7.5" cy="3.4" r="1.5" fill="none" stroke="#000" stroke-width="1.1"/><path d="M7.5 4.8V12.5M5 6.8H10" stroke="#000" stroke-width="1.3"/><path d="M2.2 9.8Q3 12.8 7.5 12.8Q12 12.8 12.8 9.8" fill="none" stroke="#000" stroke-width="1.7"/></svg>
<div class="t" style="left:137px;top:100px;font-size:11px">Fixed Points</div>
<svg style="left:63px;top:117px" width="9" height="9" viewBox="0 0 9 9"><rect x="0.5" y="0.5" width="8" height="8" fill="#fff" stroke="#8c8c8c"/><path d="M2 4.5H7" stroke="#000"/></svg>
<div class="a" style="left:73px;top:121px;width:9px;height:1px;background:repeating-linear-gradient(to right,#808080 0 1px,transparent 1px 2px)"></div>
<svg style="left:82px;top:122px" width="8" height="8" viewBox="0 0 8 8"><path d="M0.7 3.6L2.7 6.6L6.8 0.6" fill="none" stroke="#078507" stroke-width="1.8"/></svg>
<svg style="left:89px;top:113px" width="16" height="14" viewBox="0 0 16 14"><g shape-rendering="crispEdges"><rect x="5" y="1" width="3" height="1" fill="#000"/><rect x="3" y="2" width="2" height="1" fill="#000"/><rect x="5" y="2" width="3" height="1" fill="#fff"/><rect x="8" y="2" width="2" height="1" fill="#000"/><rect x="1" y="3" width="2" height="1" fill="#000"/><rect x="3" y="3" width="6" height="1" fill="#fff"/><rect x="9" y="3" width="3" height="1" fill="#000"/><rect x="1" y="4" width="1" height="1" fill="#000"/><rect x="2" y="4" width="1" height="1" fill="#fff"/><rect x="3" y="4" width="2" height="1" fill="#000"/><rect x="5" y="4" width="2" height="1" fill="#fff"/><rect x="7" y="4" width="2" height="1" fill="#000"/><rect x="9" y="4" width="3" height="1" fill="#fff"/><rect x="12" y="4" width="2" height="1" fill="#000"/><rect x="1" y="5" width="1" height="1" fill="#000"/><rect x="2" y="5" width="3" height="1" fill="#fff"/><rect x="5" y="5" width="2" height="1" fill="#000"/><rect x="7" y="5" width="7" height="1" fill="#fff"/><rect x="14" y="5" width="2" height="1" fill="#000"/><rect x="1" y="6" width="1" height="1" fill="#000"/><rect x="2" y="6" width="3" height="1" fill="#fff"/><rect x="5" y="6" width="1" height="1" fill="#000"/><rect x="6" y="6" width="1" height="1" fill="#c43ce6"/><rect x="7" y="6" width="2" height="1" fill="#000"/><rect x="9" y="6" width="3" height="1" fill="#fff"/><rect x="12" y="6" width="2" height="1" fill="#000"/><rect x="14" y="6" width="1" height="1" fill="#fff"/><rect x="15" y="6" width="1" height="1" fill="#000"/><rect x="1" y="7" width="1" height="1" fill="#000"/><rect x="2" y="7" width="3" height="1" fill="#fff"/><rect x="5" y="7" width="1" height="1" fill="#000"/><rect x="6" y="7" width="3" height="1" fill="#c43ce6"/><rect x="9" y="7" width="3" height="1" fill="#000"/><rect x="12" y="7" width="3" height="1" fill="#fff"/><rect x="15" y="7" width="1" height="1" fill="#000"/><rect x="1" y="8" width="1" height="1" fill="#000"/><rect x="2" y="8" width="3" height="1" fill="#fff"/><rect x="5" y="8" width="1" height="1" fill="#000"/><rect x="6" y="8" width="4" height="1" fill="#c43ce6"/><rect x="10" y="8" width="1" height="1" fill="#000"/><rect x="11" y="8" width="4" height="1" fill="#fff"/><rect x="15" y="8" width="1" height="1" fill="#000"/><rect x="1" y="9" width="2" height="1" fill="#000"/><rect x="3" y="9" width="2" height="1" fill="#fff"/><rect x="5" y="9" width="1" height="1" fill="#000"/><rect x="6" y="9" width="4" height="1" fill="#c43ce6"/><rect x="10" y="9" width="1" height="1" fill="#000"/><rect x="11" y="9" width="4" height="1" fill="#fff"/><rect x="15" y="9" width="1" height="1" fill="#000"/><rect x="3" y="10" width="3" height="1" fill="#000"/><rect x="6" y="10" width="4" height="1" fill="#c43ce6"/><rect x="10" y="10" width="1" height="1" fill="#000"/><rect x="11" y="10" width="4" height="1" fill="#fff"/><rect x="15" y="10" width="1" height="1" fill="#000"/><rect x="5" y="11" width="2" height="1" fill="#000"/><rect x="7" y="11" width="3" height="1" fill="#c43ce6"/><rect x="10" y="11" width="1" height="1" fill="#000"/><rect x="11" y="11" width="3" height="1" fill="#fff"/><rect x="14" y="11" width="2" height="1" fill="#000"/><rect x="7" y="12" width="2" height="1" fill="#000"/><rect x="9" y="12" width="1" height="1" fill="#fff"/><rect x="10" y="12" width="1" height="1" fill="#000"/><rect x="11" y="12" width="1" height="1" fill="#fff"/><rect x="12" y="12" width="2" height="1" fill="#000"/><rect x="9" y="13" width="3" height="1" fill="#000"/></g></svg>
<div class="t" style="left:110px;top:116px;font-size:11px">Connections</div>
<div class="a" style="left:95px;top:137px;width:14px;height:1px;background:repeating-linear-gradient(to right,#808080 0 1px,transparent 1px 2px)"></div>
<svg style="left:109px;top:138px" width="8" height="8" viewBox="0 0 8 8"><path d="M0.7 3.6L2.7 6.6L6.8 0.6" fill="none" stroke="#078507" stroke-width="1.8"/></svg>
<svg style="left:117px;top:131px" width="16" height="10" viewBox="0 0 16 10"><path d="M0 5.5H16" stroke="#000" stroke-width="1"/><path d="M0 5.5H5" stroke="#2a6a2a" stroke-width="1"/><path d="M7.5 2.5L10.5 5.5L7.5 8.5L4.5 5.5Z" fill="#109010" stroke="#0a500a" stroke-width="0.6"/></svg>
<div class="t" style="left:137px;top:132px;font-size:11px">Connection Data</div>
<svg style="left:90px;top:149px" width="9" height="9" viewBox="0 0 9 9"><rect x="0.5" y="0.5" width="8" height="8" fill="#fff" stroke="#8c8c8c"/><path d="M2 4.5H7" stroke="#000"/><path d="M4.5 2V7" stroke="#000"/></svg>
<div class="a" style="left:100px;top:153px;width:9px;height:1px;background:repeating-linear-gradient(to right,#808080 0 1px,transparent 1px 2px)"></div>
<svg style="left:109px;top:154px" width="8" height="8" viewBox="0 0 8 8"><path d="M0.7 3.6L2.7 6.6L6.8 0.6" fill="none" stroke="#078507" stroke-width="1.8"/></svg>
<svg style="left:117px;top:145px" width="15" height="14" viewBox="0 0 15 14"><path d="M1.5 10A6 6 0 0 1 13.5 10" fill="none" stroke="#333" stroke-width="1.4"/><defs><radialGradient id="jg" cx="0.4" cy="0.35" r="0.7"><stop offset="0" stop-color="#e8e8e8"/><stop offset="1" stop-color="#5a5a5a"/></radialGradient></defs><circle cx="7.5" cy="9.4" r="3.4" fill="url(#jg)"/></svg>
<div class="t" style="left:137px;top:148px;font-size:11px">Joint 1</div>
<svg style="left:90px;top:165px" width="9" height="9" viewBox="0 0 9 9"><rect x="0.5" y="0.5" width="8" height="8" fill="#fff" stroke="#8c8c8c"/><path d="M2 4.5H7" stroke="#000"/><path d="M4.5 2V7" stroke="#000"/></svg>
<div class="a" style="left:100px;top:169px;width:9px;height:1px;background:repeating-linear-gradient(to right,#808080 0 1px,transparent 1px 2px)"></div>
<svg style="left:109px;top:170px" width="8" height="8" viewBox="0 0 8 8"><path d="M0.7 3.6L2.7 6.6L6.8 0.6" fill="none" stroke="#078507" stroke-width="1.8"/></svg>
<svg style="left:117px;top:161px" width="15" height="14" viewBox="0 0 15 14"><path d="M1.5 10A6 6 0 0 1 13.5 10" fill="none" stroke="#333" stroke-width="1.4"/><defs><radialGradient id="jg" cx="0.4" cy="0.35" r="0.7"><stop offset="0" stop-color="#e8e8e8"/><stop offset="1" stop-color="#5a5a5a"/></radialGradient></defs><circle cx="7.5" cy="9.4" r="3.4" fill="url(#jg)"/></svg>
<div class="t" style="left:137px;top:164px;font-size:11px">Joint 2</div>
<svg style="left:90px;top:181px" width="9" height="9" viewBox="0 0 9 9"><rect x="0.5" y="0.5" width="8" height="8" fill="#fff" stroke="#8c8c8c"/><path d="M2 4.5H7" stroke="#000"/><path d="M4.5 2V7" stroke="#000"/></svg>
<div class="a" style="left:100px;top:185px;width:9px;height:1px;background:repeating-linear-gradient(to right,#808080 0 1px,transparent 1px 2px)"></div>
<svg style="left:109px;top:186px" width="8" height="8" viewBox="0 0 8 8"><path d="M0.7 3.6L2.7 6.6L6.8 0.6" fill="none" stroke="#078507" stroke-width="1.8"/></svg>
<svg style="left:117px;top:177px" width="15" height="14" viewBox="0 0 15 14"><path d="M1.5 10A6 6 0 0 1 13.5 10" fill="none" stroke="#333" stroke-width="1.4"/><defs><radialGradient id="jg" cx="0.4" cy="0.35" r="0.7"><stop offset="0" stop-color="#e8e8e8"/><stop offset="1" stop-color="#5a5a5a"/></radialGradient></defs><circle cx="7.5" cy="9.4" r="3.4" fill="url(#jg)"/></svg>
<div class="t" style="left:137px;top:180px;font-size:11px">Joint 3</div>
<svg style="left:90px;top:197px" width="9" height="9" viewBox="0 0 9 9"><rect x="0.5" y="0.5" width="8" height="8" fill="#fff" stroke="#8c8c8c"/><path d="M2 4.5H7" stroke="#000"/><path d="M4.5 2V7" stroke="#000"/></svg>
<div class="a" style="left:100px;top:201px;width:9px;height:1px;background:repeating-linear-gradient(to right,#808080 0 1px,transparent 1px 2px)"></div>
<svg style="left:109px;top:202px" width="8" height="8" viewBox="0 0 8 8"><path d="M0.7 3.6L2.7 6.6L6.8 0.6" fill="none" stroke="#078507" stroke-width="1.8"/></svg>
<svg style="left:117px;top:193px" width="15" height="14" viewBox="0 0 15 14"><path d="M1.5 10A6 6 0 0 1 13.5 10" fill="none" stroke="#333" stroke-width="1.4"/><defs><radialGradient id="jg" cx="0.4" cy="0.35" r="0.7"><stop offset="0" stop-color="#e8e8e8"/><stop offset="1" stop-color="#5a5a5a"/></radialGradient></defs><circle cx="7.5" cy="9.4" r="3.4" fill="url(#jg)"/></svg>
<div class="t" style="left:137px;top:196px;font-size:11px">Joint 4</div>
<svg style="left:90px;top:213px" width="9" height="9" viewBox="0 0 9 9"><rect x="0.5" y="0.5" width="8" height="8" fill="#fff" stroke="#8c8c8c"/><path d="M2 4.5H7" stroke="#000"/><path d="M4.5 2V7" stroke="#000"/></svg>
<div class="a" style="left:100px;top:217px;width:9px;height:1px;background:repeating-linear-gradient(to right,#808080 0 1px,transparent 1px 2px)"></div>
<svg style="left:109px;top:218px" width="8" height="8" viewBox="0 0 8 8"><path d="M0.7 3.6L2.7 6.6L6.8 0.6" fill="none" stroke="#078507" stroke-width="1.8"/></svg>
<svg style="left:117px;top:209px" width="15" height="14" viewBox="0 0 15 14"><path d="M1.5 10A6 6 0 0 1 13.5 10" fill="none" stroke="#333" stroke-width="1.4"/><defs><radialGradient id="jg" cx="0.4" cy="0.35" r="0.7"><stop offset="0" stop-color="#e8e8e8"/><stop offset="1" stop-color="#5a5a5a"/></radialGradient></defs><circle cx="7.5" cy="9.4" r="3.4" fill="url(#jg)"/></svg>
<div class="t" style="left:137px;top:212px;font-size:11px">Joint 5</div>
<div class="a" style="left:95px;top:233px;width:14px;height:1px;background:repeating-linear-gradient(to right,#808080 0 1px,transparent 1px 2px)"></div>
<svg style="left:109px;top:234px" width="8" height="8" viewBox="0 0 8 8"><path d="M0.7 3.6L2.7 6.6L6.8 0.6" fill="none" stroke="#078507" stroke-width="1.8"/></svg>
<svg style="left:117px;top:228px" width="16" height="10" viewBox="0 0 16 10"><rect x="0" y="2" width="3" height="3" fill="#000"/><rect x="13" y="2" width="3" height="3" fill="#000"/><path d="M2.5 2.5Q3.5 0.8 4.8 1.6L7 4.3H9L11.2 1.6Q12.5 0.8 13.5 2.5" fill="none" stroke="#0d8f0d" stroke-width="1.5"/><path d="M4.5 7.5H11.5" stroke="#000" stroke-width="1.2"/><path d="M5.5 6V9M10.5 6V9" stroke="#000" stroke-width="1.3"/></svg>
<div class="t" style="left:137px;top:228px;font-size:11px">Cable 1</div>
<div class="a" style="left:95px;top:249px;width:14px;height:1px;background:repeating-linear-gradient(to right,#808080 0 1px,transparent 1px 2px)"></div>
<svg style="left:109px;top:250px" width="8" height="8" viewBox="0 0 8 8"><path d="M0.7 3.6L2.7 6.6L6.8 0.6" fill="none" stroke="#078507" stroke-width="1.8"/></svg>
<svg style="left:117px;top:244px" width="16" height="10" viewBox="0 0 16 10"><rect x="0" y="2" width="3" height="3" fill="#000"/><rect x="13" y="2" width="3" height="3" fill="#000"/><path d="M2.5 2.5Q3.5 0.8 4.8 1.6L7 4.3H9L11.2 1.6Q12.5 0.8 13.5 2.5" fill="none" stroke="#0d8f0d" stroke-width="1.5"/><path d="M4.5 7.5H11.5" stroke="#000" stroke-width="1.2"/><path d="M5.5 6V9M10.5 6V9" stroke="#000" stroke-width="1.3"/></svg>
<div class="t" style="left:137px;top:244px;font-size:11px">Cable 2</div>
<div class="a" style="left:95px;top:265px;width:14px;height:1px;background:repeating-linear-gradient(to right,#808080 0 1px,transparent 1px 2px)"></div>
<svg style="left:109px;top:266px" width="8" height="8" viewBox="0 0 8 8"><path d="M0.7 3.6L2.7 6.6L6.8 0.6" fill="none" stroke="#078507" stroke-width="1.8"/></svg>
<svg style="left:117px;top:260px" width="16" height="10" viewBox="0 0 16 10"><rect x="0" y="2" width="3" height="3" fill="#000"/><rect x="13" y="2" width="3" height="3" fill="#000"/><path d="M2.5 2.5Q3.5 0.8 4.8 1.6L7 4.3H9L11.2 1.6Q12.5 0.8 13.5 2.5" fill="none" stroke="#0d8f0d" stroke-width="1.5"/><path d="M4.5 7.5H11.5" stroke="#000" stroke-width="1.2"/><path d="M5.5 6V9M10.5 6V9" stroke="#000" stroke-width="1.3"/></svg>
<div class="t" style="left:137px;top:260px;font-size:11px">Cable 3</div>
<div class="a" style="left:95px;top:281px;width:14px;height:1px;background:repeating-linear-gradient(to right,#808080 0 1px,transparent 1px 2px)"></div>
<svg style="left:109px;top:282px" width="8" height="8" viewBox="0 0 8 8"><path d="M0.7 3.6L2.7 6.6L6.8 0.6" fill="none" stroke="#078507" stroke-width="1.8"/></svg>
<svg style="left:117px;top:276px" width="16" height="10" viewBox="0 0 16 10"><rect x="0" y="2" width="3" height="3" fill="#000"/><rect x="13" y="2" width="3" height="3" fill="#000"/><path d="M2.5 2.5Q3.5 0.8 4.8 1.6L7 4.3H9L11.2 1.6Q12.5 0.8 13.5 2.5" fill="none" stroke="#0d8f0d" stroke-width="1.5"/><path d="M4.5 7.5H11.5" stroke="#000" stroke-width="1.2"/><path d="M5.5 6V9M10.5 6V9" stroke="#000" stroke-width="1.3"/></svg>
<div class="t" style="left:137px;top:276px;font-size:11px">Cable 4</div>
<div class="a" style="left:68px;top:297px;width:14px;height:1px;background:repeating-linear-gradient(to right,#808080 0 1px,transparent 1px 2px)"></div>
<svg style="left:82px;top:298px" width="8" height="8" viewBox="0 0 8 8"><path d="M0.7 3.6L2.7 6.6L6.8 0.6" fill="none" stroke="#078507" stroke-width="1.8"/></svg>
<svg style="left:89px;top:289px" width="16" height="14" viewBox="0 0 16 14"><g shape-rendering="crispEdges"><rect x="5" y="1" width="3" height="1" fill="#000"/><rect x="3" y="2" width="2" height="1" fill="#000"/><rect x="5" y="2" width="1" height="1" fill="#fff"/><rect x="6" y="2" width="1" height="1" fill="#3a4fe0"/><rect x="7" y="2" width="1" height="1" fill="#fff"/><rect x="8" y="2" width="2" height="1" fill="#000"/><rect x="1" y="3" width="2" height="1" fill="#000"/><rect x="3" y="3" width="1" height="1" fill="#3a4fe0"/><rect x="4" y="3" width="1" height="1" fill="#fff"/><rect x="5" y="3" width="1" height="1" fill="#3a4fe0"/><rect x="6" y="3" width="1" height="1" fill="#fff"/><rect x="7" y="3" width="1" height="1" fill="#3a4fe0"/><rect x="8" y="3" width="1" height="1" fill="#fff"/><rect x="9" y="3" width="3" height="1" fill="#000"/><rect x="1" y="4" width="1" height="1" fill="#000"/><rect x="2" y="4" width="1" height="1" fill="#3a4fe0"/><rect x="3" y="4" width="2" height="1" fill="#000"/><rect x="5" y="4" width="1" height="1" fill="#fff"/><rect x="6" y="4" width="1" height="1" fill="#3a4fe0"/><rect x="7" y="4" width="2" height="1" fill="#000"/><rect x="9" y="4" width="1" height="1" fill="#fff"/><rect x="10" y="4" width="1" height="1" fill="#3a4fe0"/><rect x="11" y="4" width="1" height="1" fill="#fff"/><rect x="12" y="4" width="2" height="1" fill="#000"/><rect x="1" y="5" width="1" height="1" fill="#000"/><rect x="2" y="5" width="1" height="1" fill="#fff"/><rect x="3" y="5" width="1" height="1" fill="#3a4fe0"/><rect x="4" y="5" width="1" height="1" fill="#fff"/><rect x="5" y="5" width="2" height="1" fill="#000"/><rect x="7" y="5" width="1" height="1" fill="#3a4fe0"/><rect x="8" y="5" width="1" height="1" fill="#fff"/><rect x="9" y="5" width="1" height="1" fill="#3a4fe0"/><rect x="10" y="5" width="1" height="1" fill="#fff"/><rect x="11" y="5" width="1" height="1" fill="#3a4fe0"/><rect x="12" y="5" width="1" height="1" fill="#fff"/><rect x="13" y="5" width="1" height="1" fill="#3a4fe0"/><rect x="14" y="5" width="2" height="1" fill="#000"/><rect x="1" y="6" width="1" height="1" fill="#000"/><rect x="2" y="6" width="1" height="1" fill="#3a4fe0"/><rect x="3" y="6" width="1" height="1" fill="#fff"/><rect x="4" y="6" width="1" height="1" fill="#3a4fe0"/><rect x="5" y="6" width="1" height="1" fill="#000"/><rect x="6" y="6" width="1" height="1" fill="#3a4fe0"/><rect x="7" y="6" width="2" height="1" fill="#000"/><rect x="9" y="6" width="1" height="1" fill="#fff"/><rect x="10" y="6" width="1" height="1" fill="#3a4fe0"/><rect x="11" y="6" width="1" height="1" fill="#fff"/><rect x="12" y="6" width="2" height="1" fill="#000"/><rect x="14" y="6" width="1" height="1" fill="#3a4fe0"/><rect x="15" y="6" width="1" height="1" fill="#000"/><rect x="1" y="7" width="1" height="1" fill="#000"/><rect x="2" y="7" width="1" height="1" fill="#fff"/><rect x="3" y="7" width="1" height="1" fill="#3a4fe0"/><rect x="4" y="7" width="1" height="1" fill="#fff"/><rect x="5" y="7" width="1" height="1" fill="#000"/><rect x="6" y="7" width="3" height="1" fill="#3a4fe0"/><rect x="9" y="7" width="3" height="1" fill="#000"/><rect x="12" y="7" width="1" height="1" fill="#fff"/><rect x="13" y="7" width="1" height="1" fill="#3a4fe0"/><rect x="14" y="7" width="1" height="1" fill="#fff"/><rect x="15" y="7" width="1" height="1" fill="#000"/><rect x="1" y="8" width="1" height="1" fill="#000"/><rect x="2" y="8" width="1" height="1" fill="#3a4fe0"/><rect x="3" y="8" width="1" height="1" fill="#fff"/><rect x="4" y="8" width="1" height="1" fill="#3a4fe0"/><rect x="5" y="8" width="1" height="1" fill="#000"/><rect x="6" y="8" width="4" height="1" fill="#3a4fe0"/><rect x="10" y="8" width="1" height="1" fill="#000"/><rect x="11" y="8" width="1" height="1" fill="#fff"/><rect x="12" y="8" width="1" height="1" fill="#3a4fe0"/><rect x="13" y="8" width="1" height="1" fill="#fff"/><rect x="14" y="8" width="1" height="1" fill="#3a4fe0"/><rect x="15" y="8" width="1" height="1" fill="#000"/><rect x="1" y="9" width="2" height="1" fill="#000"/><rect x="3" y="9" width="1" height="1" fill="#3a4fe0"/><rect x="4" y="9" width="1" height="1" fill="#fff"/><rect x="5" y="9" width="1" height="1" fill="#000"/><rect x="6" y="9" width="4" height="1" fill="#3a4fe0"/><rect x="10" y="9" width="1" height="1" fill="#000"/><rect x="11" y="9" width="1" height="1" fill="#3a4fe0"/><rect x="12" y="9" width="1" height="1" fill="#fff"/><rect x="13" y="9" width="1" height="1" fill="#3a4fe0"/><rect x="14" y="9" width="1" height="1" fill="#fff"/><rect x="15" y="9" width="1" height="1" fill="#000"/><rect x="3" y="10" width="3" height="1" fill="#000"/><rect x="6" y="10" width="4" height="1" fill="#3a4fe0"/><rect x="10" y="10" width="1" height="1" fill="#000"/><rect x="11" y="10" width="1" height="1" fill="#fff"/><rect x="12" y="10" width="1" height="1" fill="#3a4fe0"/><rect x="13" y="10" width="1" height="1" fill="#fff"/><rect x="14" y="10" width="1" height="1" fill="#3a4fe0"/><rect x="15" y="10" width="1" height="1" fill="#000"/><rect x="5" y="11" width="2" height="1" fill="#000"/><rect x="7" y="11" width="3" height="1" fill="#3a4fe0"/><rect x="10" y="11" width="1" height="1" fill="#000"/><rect x="11" y="11" width="1" height="1" fill="#3a4fe0"/><rect x="12" y="11" width="1" height="1" fill="#fff"/><rect x="13" y="11" width="1" height="1" fill="#3a4fe0"/><rect x="14" y="11" width="2" height="1" fill="#000"/><rect x="7" y="12" width="2" height="1" fill="#000"/><rect x="9" y="12" width="1" height="1" fill="#fff"/><rect x="10" y="12" width="1" height="1" fill="#000"/><rect x="11" y="12" width="1" height="1" fill="#fff"/><rect x="12" y="12" width="2" height="1" fill="#000"/><rect x="9" y="13" width="3" height="1" fill="#000"/></g></svg>
<div class="t" style="left:110px;top:292px;font-size:11px">Mesh</div>
</div>
<div class="a" style="left:0px;top:395px;width:340px;height:20px;background:linear-gradient(to right,#b9c9da,#d3dfeb 60%,#d6e2ee)"></div>
<div class="t" style="left:4px;top:400px;font-size:12px;">Details</div>
<svg style="left:326px;top:400px;" width="8" height="12" viewBox="0 0 8 12"><rect x="2" y="1" width="4" height="6" fill="#eef4ff"/><path d="M2 0.8V7M6 0.8V7" stroke="#111" stroke-width="1.3"/><path d="M1.5 1H6.5" stroke="#111" stroke-width="1"/><path d="M0.3 7.5H7.7" stroke="#111" stroke-width="1.3"/><path d="M4 8V11.2" stroke="#4a8ad0" stroke-width="1.3"/></svg>
<div class="a" style="left:0px;top:415px;width:340px;height:286px;background:#fff"></div>
<div class="a" style="left:13px;top:415px;width:327px;height:19px;background:#fff;border-top:1px solid #a0a0a0;border-left:1px solid #a0a0a0;border-right:1px solid #a0a0a0"></div>
<div class="t" style="left:17px;top:419px;font-size:11px;font-weight:bold;transform:scaleX(1.048);transform-origin:0 0">Details of Structure Selection</div>
<svg style="left:2px;top:420px;" width="9" height="9" viewBox="0 0 9 9"><rect x="0.5" y="0.5" width="8" height="8" fill="#fff" stroke="#8c8c8c"/><path d="M2 4.5H7" stroke="#000"/></svg>
<div class="a" style="left:13px;top:434px;width:173px;height:19px;background:#fff;border-top:1px solid #a0a0a0;border-left:1px solid #a0a0a0"></div>
<div class="a" style="left:186px;top:434px;width:154px;height:19px;background:#fff;border-top:1px solid #a0a0a0;border-left:1px solid #a0a0a0;border-right:1px solid #a0a0a0"></div>
<div class="t" style="left:17px;top:438px;font-size:11px;">Name</div>
<div class="t" style="left:189px;top:438px;font-size:11px;">Structure Selection</div>
<div class="a" style="left:13px;top:453px;width:173px;height:19px;background:#fff;border-top:1px solid #a0a0a0;border-left:1px solid #a0a0a0"></div>
<div class="a" style="left:186px;top:453px;width:154px;height:19px;background:#fff;border-top:1px solid #a0a0a0;border-left:1px solid #a0a0a0;border-right:1px solid #a0a0a0"></div>
<div class="t" style="left:17px;top:457px;font-size:11px;">Structures to Exclude</div>
<div class="t" style="left:189px;top:457px;font-size:11px;">None</div>
<div class="a" style="left:13px;top:472px;width:327px;height:19px;background:#fff;border-top:1px solid #a0a0a0;border-left:1px solid #a0a0a0;border-right:1px solid #a0a0a0"></div>
<div class="t" style="left:17px;top:476px;font-size:11px;font-weight:bold;transform:scaleX(1.048);transform-origin:0 0">Group of Structures</div>
<svg style="left:2px;top:477px;" width="9" height="9" viewBox="0 0 9 9"><rect x="0.5" y="0.5" width="8" height="8" fill="#fff" stroke="#8c8c8c"/><path d="M2 4.5H7" stroke="#000"/></svg>
<div class="a" style="left:13px;top:491px;width:173px;height:19px;background:#fff;border-top:1px solid #a0a0a0;border-left:1px solid #a0a0a0"></div>
<div class="a" style="left:186px;top:491px;width:154px;height:19px;background:#fff;border-top:1px solid #a0a0a0;border-left:1px solid #a0a0a0;border-right:1px solid #a0a0a0"></div>
<div class="t" style="left:17px;top:495px;font-size:11px;">Interacting Structure Group 1</div>
<div class="t" style="left:189px;top:495px;font-size:11px;">All</div>
<div class="a" style="left:13px;top:510px;width:173px;height:19px;background:#fff;border-top:1px solid #a0a0a0;border-left:1px solid #a0a0a0"></div>
<div class="a" style="left:186px;top:510px;width:154px;height:19px;background:#fff;border-top:1px solid #a0a0a0;border-left:1px solid #a0a0a0;border-right:1px solid #a0a0a0"></div>
<div class="t" style="left:17px;top:514px;font-size:11px;">Interacting Structure Group 2</div>
<div class="t" style="left:189px;top:514px;font-size:11px;">None</div>
<div class="a" style="left:13px;top:529px;width:327px;height:19px;background:#fff;border-top:1px solid #a0a0a0;border-left:1px solid #a0a0a0;border-right:1px solid #a0a0a0"></div>
<div class="t" style="left:17px;top:533px;font-size:11px;font-weight:bold;transform:scaleX(1.048);transform-origin:0 0">Motion Locks</div>
<svg style="left:2px;top:534px;" width="9" height="9" viewBox="0 0 9 9"><rect x="0.5" y="0.5" width="8" height="8" fill="#fff" stroke="#8c8c8c"/><path d="M2 4.5H7" stroke="#000"/></svg>
<div class="a" style="left:13px;top:548px;width:173px;height:19px;background:#fff;border-top:1px solid #a0a0a0;border-left:1px solid #a0a0a0"></div>
<div class="a" style="left:186px;top:548px;width:154px;height:19px;background:#fff;border-top:1px solid #a0a0a0;border-left:1px solid #a0a0a0;border-right:1px solid #a0a0a0"></div>
<div class="t" style="left:17px;top:552px;font-size:11px;">Apply Motion Lock to Group 1</div>
<div class="t" style="left:189px;top:552px;font-size:11px;">No</div>
<div class="a" style="left:13px;top:567px;width:327px;height:19px;background:#fff;border-top:1px solid #a0a0a0;border-left:1px solid #a0a0a0;border-right:1px solid #a0a0a0"></div>
<div class="t" style="left:17px;top:571px;font-size:11px;font-weight:bold;transform:scaleX(1.048);transform-origin:0 0">Structure Ordering</div>
<svg style="left:2px;top:572px;" width="9" height="9" viewBox="0 0 9 9"><rect x="0.5" y="0.5" width="8" height="8" fill="#fff" stroke="#8c8c8c"/><path d="M2 4.5H7" stroke="#000"/></svg>
<div class="a" style="left:13px;top:586px;width:173px;height:19px;background:#fff;border-top:1px solid #a0a0a0;border-left:1px solid #a0a0a0"></div>
<div class="a" style="left:186px;top:586px;width:154px;height:19px;background:#e9e5e2;border-top:1px solid #a0a0a0;border-left:1px solid #a0a0a0;border-right:1px solid #a0a0a0"></div>
<div class="t" style="left:17px;top:590px;font-size:11px;">Structure 1</div>
<div class="t" style="left:189px;top:590px;font-size:11px;">Body 1</div>
<div class="a" style="left:13px;top:605px;width:173px;height:19px;background:#fff;border-top:1px solid #a0a0a0;border-left:1px solid #a0a0a0"></div>
<div class="a" style="left:186px;top:605px;width:154px;height:19px;background:#e9e5e2;border-top:1px solid #a0a0a0;border-left:1px solid #a0a0a0;border-right:1px solid #a0a0a0"></div>
<div class="t" style="left:17px;top:609px;font-size:11px;">Structure 2</div>
<div class="t" style="left:189px;top:609px;font-size:11px;">Body 2</div>
<div class="a" style="left:13px;top:624px;width:173px;height:19px;background:#fff;border-top:1px solid #a0a0a0;border-left:1px solid #a0a0a0"></div>
<div class="a" style="left:186px;top:624px;width:154px;height:19px;background:#e9e5e2;border-top:1px solid #a0a0a0;border-left:1px solid #a0a0a0;border-right:1px solid #a0a0a0"></div>
<div class="t" style="left:17px;top:628px;font-size:11px;">Structure 3</div>
<div class="t" style="left:189px;top:628px;font-size:11px;">Body 3</div>
<div class="a" style="left:13px;top:643px;width:173px;height:19px;background:#fff;border-top:1px solid #a0a0a0;border-left:1px solid #a0a0a0"></div>
<div class="a" style="left:186px;top:643px;width:154px;height:19px;background:#e9e5e2;border-top:1px solid #a0a0a0;border-left:1px solid #a0a0a0;border-right:1px solid #a0a0a0"></div>
<div class="t" style="left:17px;top:647px;font-size:11px;">Structure 4</div>
<div class="t" style="left:189px;top:647px;font-size:11px;">Body 4</div>
<div class="a" style="left:13px;top:662px;width:173px;height:19px;background:#fff;border-top:1px solid #a0a0a0;border-left:1px solid #a0a0a0"></div>
<div class="a" style="left:186px;top:662px;width:154px;height:19px;background:#e9e5e2;border-top:1px solid #a0a0a0;border-left:1px solid #a0a0a0;border-right:1px solid #a0a0a0"></div>
<div class="t" style="left:17px;top:666px;font-size:11px;">Structure 5</div>
<div class="t" style="left:189px;top:666px;font-size:11px;">Body 5</div>
<div class="a" style="left:13px;top:681px;width:173px;height:19px;background:#fff;border-top:1px solid #a0a0a0;border-left:1px solid #a0a0a0"></div>
<div class="a" style="left:186px;top:681px;width:154px;height:19px;background:#e9e5e2;border-top:1px solid #a0a0a0;border-left:1px solid #a0a0a0;border-right:1px solid #a0a0a0"></div>
<div class="t" style="left:17px;top:685px;font-size:11px;">Structure 6</div>
<div class="t" style="left:189px;top:685px;font-size:11px;">Body 6</div>
<div class="a" style="left:13px;top:700px;width:327px;height:1px;background:#a0a0a0"></div>
<div class="a" style="left:324px;top:682px;width:16px;height:18px;background:#fff"></div>
<svg style="left:344px;top:69px" width="1020" height="359" viewBox="0 0 1020 359"><defs><linearGradient id="bg" x1="0" y1="0" x2="0" y2="1"><stop offset="0" stop-color="#6b89dd"/><stop offset="0.1" stop-color="#7793e1"/><stop offset="0.17" stop-color="#819ae4"/><stop offset="0.5" stop-color="#a6b5e6"/><stop offset="0.6" stop-color="#b8c5eb"/><stop offset="0.74" stop-color="#d8e0f6"/><stop offset="0.86" stop-color="#eef1fb"/><stop offset="1" stop-color="#fdfdff"/></linearGradient><linearGradient id="p1" gradientUnits="userSpaceOnUse" x1="0" y1="32" x2="0" y2="196"><stop offset="0" stop-color="#6e89d3"/><stop offset="1" stop-color="#a3b0dc"/></linearGradient><linearGradient id="p2" gradientUnits="userSpaceOnUse" x1="0" y1="194" x2="0" y2="358"><stop offset="0" stop-color="#9fa9c7"/><stop offset="1" stop-color="#cdcdd3"/></linearGradient></defs><rect width="1020" height="359" fill="url(#bg)"/><polygon points="0.0,64.0 976.0,32.0 1020.0,124.0 1020.0,164.0 54.0,196.0 0.0,94.0" fill="url(#p1)"/><polygon points="0.0,227.0 969.0,194.5 1020.0,294.0 1020.0,327.0 51.0,358.0 0.0,264.0" fill="url(#p2)"/><polygon points="227.0,98.5 227.0,109.0 247.5,150.0 247.5,139.5" fill="#1d8f1d"/><polygon points="247.5,139.5 333.5,137.0 333.5,147.5 247.5,150.0" fill="#1aa81a"/><polygon points="227.0,98.5 313.5,96.0 333.5,137.0 247.5,139.5" fill="#1bbf1b"/><polyline points="230.0,102.5 311.5,100.0" fill="none" stroke="#3ef03e" stroke-width="0.8" stroke-dasharray="2 2"/><polyline points="233.0,109.5 316.5,106.0" fill="none" stroke="#3ef03e" stroke-width="0.8" stroke-dasharray="2 2"/><polyline points="247.5,138.5 331.5,136.0" fill="none" stroke="#3ef03e" stroke-width="0.8" stroke-dasharray="2 2"/><polyline points="248.5,142.5 332.5,140.0" fill="none" stroke="#3ef03e" stroke-width="0.8" stroke-dasharray="2 2"/><polygon points="227.0,98.5 313.5,96.0 333.5,137.0 333.5,147.5 247.5,150.0 227.0,109.0" fill="none" stroke="#000" stroke-width="1" stroke-dasharray="2 2"/><polygon points="320.0,95.5 320.0,106.0 340.5,147.0 340.5,136.5" fill="#1d8f1d"/><polygon points="340.5,136.5 426.5,134.0 426.5,144.5 340.5,147.0" fill="#1aa81a"/><polygon points="320.0,95.5 406.5,93.0 426.5,134.0 340.5,136.5" fill="#1bbf1b"/><polyline points="323.0,99.5 404.5,97.0" fill="none" stroke="#3ef03e" stroke-width="0.8" stroke-dasharray="2 2"/><polyline points="326.0,106.5 409.5,103.0" fill="none" stroke="#3ef03e" stroke-width="0.8" stroke-dasharray="2 2"/><polyline points="340.5,135.5 424.5,133.0" fill="none" stroke="#3ef03e" stroke-width="0.8" stroke-dasharray="2 2"/><polyline points="341.5,139.5 425.5,137.0" fill="none" stroke="#3ef03e" stroke-width="0.8" stroke-dasharray="2 2"/><polygon points="320.0,95.5 406.5,93.0 426.5,134.0 426.5,144.5 340.5,147.0 320.0,106.0" fill="none" stroke="#000" stroke-width="1" stroke-dasharray="2 2"/><polygon points="413.0,92.5 413.0,103.0 433.5,144.0 433.5,133.5" fill="#1d8f1d"/><polygon points="433.5,133.5 519.5,131.0 519.5,141.5 433.5,144.0" fill="#1aa81a"/><polygon points="413.0,92.5 499.5,90.0 519.5,131.0 433.5,133.5" fill="#1bbf1b"/><polyline points="416.0,96.5 497.5,94.0" fill="none" stroke="#3ef03e" stroke-width="0.8" stroke-dasharray="2 2"/><polyline points="419.0,103.5 502.5,100.0" fill="none" stroke="#3ef03e" stroke-width="0.8" stroke-dasharray="2 2"/><polyline points="433.5,132.5 517.5,130.0" fill="none" stroke="#3ef03e" stroke-width="0.8" stroke-dasharray="2 2"/><polyline points="434.5,136.5 518.5,134.0" fill="none" stroke="#3ef03e" stroke-width="0.8" stroke-dasharray="2 2"/><polygon points="413.0,92.5 499.5,90.0 519.5,131.0 519.5,141.5 433.5,144.0 413.0,103.0" fill="none" stroke="#000" stroke-width="1" stroke-dasharray="2 2"/><polygon points="506.0,89.5 506.0,100.0 526.5,141.0 526.5,130.5" fill="#1d8f1d"/><polygon points="526.5,130.5 612.5,128.0 612.5,138.5 526.5,141.0" fill="#1aa81a"/><polygon points="506.0,89.5 592.5,87.0 612.5,128.0 526.5,130.5" fill="#1bbf1b"/><polyline points="509.0,93.5 590.5,91.0" fill="none" stroke="#3ef03e" stroke-width="0.8" stroke-dasharray="2 2"/><polyline points="512.0,100.5 595.5,97.0" fill="none" stroke="#3ef03e" stroke-width="0.8" stroke-dasharray="2 2"/><polyline points="526.5,129.5 610.5,127.0" fill="none" stroke="#3ef03e" stroke-width="0.8" stroke-dasharray="2 2"/><polyline points="527.5,133.5 611.5,131.0" fill="none" stroke="#3ef03e" stroke-width="0.8" stroke-dasharray="2 2"/><polygon points="506.0,89.5 592.5,87.0 612.5,128.0 612.5,138.5 526.5,141.0 506.0,100.0" fill="none" stroke="#000" stroke-width="1" stroke-dasharray="2 2"/><polygon points="599.0,86.5 599.0,97.0 619.5,138.0 619.5,127.5" fill="#1d8f1d"/><polygon points="619.5,127.5 705.5,125.0 705.5,135.5 619.5,138.0" fill="#1aa81a"/><polygon points="599.0,86.5 685.5,84.0 705.5,125.0 619.5,127.5" fill="#1bbf1b"/><polyline points="602.0,90.5 683.5,88.0" fill="none" stroke="#3ef03e" stroke-width="0.8" stroke-dasharray="2 2"/><polyline points="605.0,97.5 688.5,94.0" fill="none" stroke="#3ef03e" stroke-width="0.8" stroke-dasharray="2 2"/><polyline points="619.5,126.5 703.5,124.0" fill="none" stroke="#3ef03e" stroke-width="0.8" stroke-dasharray="2 2"/><polyline points="620.5,130.5 704.5,128.0" fill="none" stroke="#3ef03e" stroke-width="0.8" stroke-dasharray="2 2"/><polygon points="599.0,86.5 685.5,84.0 705.5,125.0 705.5,135.5 619.5,138.0 599.0,97.0" fill="none" stroke="#000" stroke-width="1" stroke-dasharray="2 2"/><polygon points="692.0,83.5 692.0,94.0 712.5,135.0 712.5,124.5" fill="#1d8f1d"/><polygon points="712.5,124.5 798.5,122.0 798.5,132.5 712.5,135.0" fill="#1aa81a"/><polygon points="692.0,83.5 778.5,81.0 798.5,122.0 712.5,124.5" fill="#1bbf1b"/><polyline points="695.0,87.5 776.5,85.0" fill="none" stroke="#3ef03e" stroke-width="0.8" stroke-dasharray="2 2"/><polyline points="698.0,94.5 781.5,91.0" fill="none" stroke="#3ef03e" stroke-width="0.8" stroke-dasharray="2 2"/><polyline points="712.5,123.5 796.5,121.0" fill="none" stroke="#3ef03e" stroke-width="0.8" stroke-dasharray="2 2"/><polyline points="713.5,127.5 797.5,125.0" fill="none" stroke="#3ef03e" stroke-width="0.8" stroke-dasharray="2 2"/><polygon points="692.0,83.5 778.5,81.0 798.5,122.0 798.5,132.5 712.5,135.0 692.0,94.0" fill="none" stroke="#000" stroke-width="1" stroke-dasharray="2 2"/><polygon points="902.5,49.7 913.0,22.3 923.0,22.3 933.8,49.7 925.7,49.7 918.2,32.0 910.9,49.7" fill="#fff"/><path d="M921.5999999999999 22.299999999999997L917.9000000000001 32" stroke="#7890dc" stroke-width="0.7" opacity="0.8"/><text transform="translate(934,50) scale(0.895,1)" font-family="Liberation Sans" font-weight="bold" font-size="38.5" fill="#fff" letter-spacing="-0.3">nsys</text><text transform="translate(944,73.4) scale(0.98,1)" font-family="Liberation Sans" font-weight="bold" font-size="18.3" fill="#fff">2022 R2</text><rect x="368.5" y="322.5" width="285" height="7" fill="#d4d5db" stroke="#000"/><rect x="368" y="322" width="72" height="8" fill="#000"/><rect x="510" y="322" width="72" height="8" fill="#000"/></svg>
<div class="t" style="left:701px;top:378px;font-size:12px;;transform:scaleX(0.9);transform-origin:0 0">0.00</div>
<div class="t" style="left:839px;top:378px;font-size:12px;;transform:scaleX(0.9);transform-origin:0 0">50.00</div>
<div class="t" style="left:982px;top:378px;font-size:12px;;transform:scaleX(0.93);transform-origin:0 0">100.00 (m)</div>
<div class="t" style="left:770px;top:400px;font-size:12px;;transform:scaleX(0.9);transform-origin:0 0">25.00</div>
<div class="t" style="left:913px;top:400px;font-size:12px;;transform:scaleX(0.9);transform-origin:0 0">75.00</div>
<svg style="left:1262px;top:286px;" width="100" height="112" viewBox="0 0 100 112"><path d="M26 72V30" stroke="#0000b0" stroke-width="3"/><path d="M26 22L20 36H32Z" fill="#0000c0"/><path d="M26 72H68" stroke="#c00000" stroke-width="3"/><path d="M79 71L64 65V77Z" fill="#c00000"/><path d="M26 72L19 60" stroke="#006000" stroke-width="2.5"/><circle cx="19.5" cy="60.5" r="5" fill="#0b6a0b"/><text x="30" y="14" font-family="Liberation Sans" font-size="12" fill="#1a2ad8" text-anchor="middle">Z</text><text x="90" y="72" font-family="Liberation Sans" font-size="12" fill="#e02020" text-anchor="middle">X</text><text x="19" y="53" font-family="Liberation Sans" font-size="11" fill="#20a020" text-anchor="middle">Y</text><defs><radialGradient id="cy" cx="0.35" cy="0.35" r="0.7"><stop offset="0" stop-color="#7ff"/><stop offset="1" stop-color="#0a8a9a"/></radialGradient></defs><circle cx="5" cy="105" r="5.2" fill="url(#cy)"/></svg>
<div class="a" style="left:344px;top:428px;width:1020px;height:17px;background:#f0f0f0"></div>
<svg style="left:344px;top:428px;" width="1020" height="17" viewBox="0 0 1020 17"><polygon points="69,0 141,0 133,16 76,16" fill="#f0f0f0"/><path d="M69.5 0.5L76.5 16M133.5 16L141.5 0.5" stroke="#000" stroke-width="1.1" fill="none"/><polygon points="134,0 185,0 177,16 141,16" fill="#f0f0f0"/><path d="M134.5 0.5L141.5 16M177.5 16L185.5 0.5" stroke="#000" stroke-width="1.1" fill="none"/><polygon points="178,0 276,0 268,16 185,16" fill="#f0f0f0"/><path d="M178.5 0.5L185.5 16M268.5 16L276.5 0.5" stroke="#000" stroke-width="1.1" fill="none"/><polygon points="0,0 76,0 68,16 7,16 0,16" fill="#fff"/><path d="M0.5 0.5L7.5 16M68.5 16L76.5 0.5" stroke="#000" stroke-width="1.1" fill="none"/><path d="M76 0.5H1020" stroke="#000" stroke-width="1"/><path d="M0 16.5H1020" stroke="#000" stroke-width="1"/><path d="M0.5 0V17" stroke="#000" stroke-width="1"/></svg>
<div class="t" style="left:354px;top:431px;font-size:12px;color:#000;font-weight:bold">Geometry</div>
<div class="t" style="left:423px;top:431px;font-size:12px;color:#8c8c8c;;transform:scaleX(0.98);transform-origin:0 0">Properties</div>
<div class="t" style="left:489px;top:431px;font-size:12px;color:#8c8c8c;;transform:scaleX(0.944);transform-origin:0 0">Graph</div>
<div class="t" style="left:532px;top:431px;font-size:12px;color:#000;;transform:scaleX(0.967);transform-origin:0 0">Report Preview</div>
<div class="a" style="left:344px;top:445px;width:1020px;height:4px;background:#f0f0f0"></div>
<div class="a" style="left:344px;top:449px;width:1020px;height:20px;background:linear-gradient(to right,#95b0d6,#a4bfe0 50%,#b6cde8)"></div>
<div class="t" style="left:348px;top:454px;font-size:12px;">Output</div>
<svg style="left:1336px;top:454px;" width="8" height="12" viewBox="0 0 8 12"><rect x="2" y="1" width="4" height="6" fill="#eef4ff"/><path d="M2 0.8V7M6 0.8V7" stroke="#111" stroke-width="1.3"/><path d="M1.5 1H6.5" stroke="#111" stroke-width="1"/><path d="M0.3 7.5H7.7" stroke="#111" stroke-width="1.3"/><path d="M4 8V11.2" stroke="#4a8ad0" stroke-width="1.3"/></svg>
<svg style="left:1354px;top:455px;" width="7" height="7" viewBox="0 0 7 7"><path d="M0.5 0.5L6.5 6.5M6.5 0.5L0.5 6.5" stroke="#000" stroke-width="1.5"/></svg>
<div class="a" style="left:344px;top:469px;width:1006px;height:199px;background:#fff"></div>
<div class="a" style="left:344px;top:469px;width:1px;height:199px;background:#f4f4f4"></div>
<div class="a" style="left:345px;top:469px;width:52px;height:16px;background:#f0f0f0"></div>
<div class="a" style="left:399px;top:469px;width:836px;height:16px;background:#f0f0f0"></div>
<div class="a" style="left:1236px;top:469px;width:113px;height:16px;background:#f0f0f0"></div>
<div class="a" style="left:345px;top:485px;width:52px;height:1px;background:#6e6e6e"></div>
<div class="a" style="left:399px;top:485px;width:836px;height:1px;background:#6e6e6e"></div>
<div class="a" style="left:1237px;top:485px;width:112px;height:1px;background:#6e6e6e"></div>
<div class="t" style="left:402px;top:472px;font-size:12px;;transform:scaleX(0.9);transform-origin:0 0">Text</div>
<div class="t" style="left:1240px;top:472px;font-size:12px;">Association</div>
<div class="a" style="left:344px;top:486px;width:1006px;height:182px;overflow:hidden">
<div class="a" style="left:1px;top:0px;width:52px;height:16px;background:#f0f0f0"></div>
<div class="a" style="left:1px;top:16px;width:52px;height:1px;background:#6e6e6e"></div>
<div class="t" style="left:3px;top:3px;font-size:12px;;transform:scaleX(0.938);transform-origin:0 0">Error</div>
<div class="t" style="left:60px;top:3px;font-size:12px;;transform:scaleX(0.99);transform-origin:0 0">Solve aborted!</div>
<div class="a" style="left:55px;top:16px;width:836px;height:1px;background:#c8c8c8"></div>
<div class="a" style="left:893px;top:16px;width:113px;height:1px;background:#c8c8c8"></div>
<div class="t" style="left:896px;top:3px;font-size:12px;;transform:scaleX(1.02);transform-origin:0 0">Project&gt;Model&gt;Hyd</div>
<div class="a" style="left:1px;top:17px;width:52px;height:16px;background:#f0f0f0"></div>
<div class="a" style="left:1px;top:33px;width:52px;height:1px;background:#6e6e6e"></div>
<div class="t" style="left:3px;top:20px;font-size:12px;;transform:scaleX(0.938);transform-origin:0 0">Error</div>
<div class="t" style="left:60px;top:20px;font-size:12px;;transform:scaleX(0.98);transform-origin:0 0">The Aqwa Core Solver stopped unexpectedly.</div>
<div class="a" style="left:55px;top:33px;width:836px;height:1px;background:#c8c8c8"></div>
<div class="a" style="left:893px;top:33px;width:113px;height:1px;background:#c8c8c8"></div>
<div class="t" style="left:896px;top:20px;font-size:12px;;transform:scaleX(1.02);transform-origin:0 0">Project&gt;Model&gt;Hyd</div>
<div class="a" style="left:1px;top:34px;width:52px;height:16px;background:#f0f0f0"></div>
<div class="a" style="left:1px;top:50px;width:52px;height:1px;background:#6e6e6e"></div>
<div class="t" style="left:3px;top:37px;font-size:12px;;transform:scaleX(0.938);transform-origin:0 0">Error</div>
<div class="t" style="left:60px;top:37px;font-size:12px;;transform:scaleX(0.884);transform-origin:0 0">TERMINATED WITH ERRORS.</div>
<div class="a" style="left:893px;top:50px;width:113px;height:1px;background:#c8c8c8"></div>
<div class="t" style="left:896px;top:37px;font-size:12px;;transform:scaleX(1.02);transform-origin:0 0">Project&gt;Model&gt;Hyd</div>
<div class="a" style="left:1px;top:51px;width:52px;height:16px;background:#f0f0f0"></div>
<div class="a" style="left:1px;top:67px;width:52px;height:1px;background:#6e6e6e"></div>
<div class="t" style="left:3px;top:54px;font-size:12px;;transform:scaleX(0.938);transform-origin:0 0">Error</div>
<div class="a" style="left:55px;top:50px;width:836px;height:17px;background:#0078d7"></div>
<div class="t" style="left:60px;top:54px;font-size:12px;color:#fff;transform:scaleX(0.902);transform-origin:0 0">HYDRODYNAMICALLY INTERACTING STRUCTURES HAVE MOVED TOO FAR FROM ANALYSIS POSITION MOVEMENT EXCEEDS 75% STOPPED AT TIME = 0.00.</div>
<div class="a" style="left:55px;top:67px;width:836px;height:1px;background:#c8c8c8"></div>
<div class="a" style="left:893px;top:67px;width:113px;height:1px;background:#c8c8c8"></div>
<div class="t" style="left:896px;top:54px;font-size:12px;;transform:scaleX(1.02);transform-origin:0 0">Project&gt;Model&gt;Hyd</div>
<div class="a" style="left:1px;top:68px;width:52px;height:16px;background:#f0f0f0"></div>
<div class="a" style="left:1px;top:84px;width:52px;height:1px;background:#6e6e6e"></div>
<div class="t" style="left:3px;top:71px;font-size:12px;;transform:scaleX(0.993);transform-origin:0 0">Warning</div>
<div class="t" style="left:60px;top:71px;font-size:12px;;transform:scaleX(0.913);transform-origin:0 0">THE CONVOLUTION METHOD WHICH IS MORE ACCURATE FOR ANY NON-LINEAR RESPONSE IS NOT IMPLEMENTED AS THE OPTION NCNV IS DECLARED.</div>
<div class="a" style="left:55px;top:84px;width:836px;height:1px;background:#c8c8c8"></div>
<div class="a" style="left:893px;top:84px;width:113px;height:1px;background:#c8c8c8"></div>
<div class="t" style="left:896px;top:71px;font-size:12px;;transform:scaleX(1.02);transform-origin:0 0">Project&gt;Model&gt;Hyd</div>
<div class="a" style="left:1px;top:85px;width:52px;height:16px;background:#f0f0f0"></div>
<div class="a" style="left:1px;top:101px;width:52px;height:1px;background:#6e6e6e"></div>
<div class="t" style="left:3px;top:88px;font-size:12px;;transform:scaleX(1.0);transform-origin:0 0">Info</div>
<div class="t" style="left:60px;top:88px;font-size:12px;;transform:scaleX(0.888);transform-origin:0 0">HYDRODYNAMIC DATA FOR STRUCTURE 6 COPIED FROM SPECIFIED .HYD FILE, STRUCTURE 6.</div>
<div class="a" style="left:55px;top:101px;width:836px;height:1px;background:#c8c8c8"></div>
<div class="a" style="left:893px;top:101px;width:113px;height:1px;background:#c8c8c8"></div>
<div class="t" style="left:896px;top:88px;font-size:12px;;transform:scaleX(1.02);transform-origin:0 0">Project&gt;Model&gt;Hyd</div>
<div class="a" style="left:1px;top:102px;width:52px;height:16px;background:#f0f0f0"></div>
<div class="a" style="left:1px;top:118px;width:52px;height:1px;background:#6e6e6e"></div>
<div class="t" style="left:3px;top:105px;font-size:12px;;transform:scaleX(1.0);transform-origin:0 0">Info</div>
<div class="t" style="left:60px;top:105px;font-size:12px;;transform:scaleX(0.888);transform-origin:0 0">HYDRODYNAMIC DATA FOR STRUCTURE 5 COPIED FROM SPECIFIED .HYD FILE, STRUCTURE 5.</div>
<div class="a" style="left:55px;top:118px;width:836px;height:1px;background:#c8c8c8"></div>
<div class="a" style="left:893px;top:118px;width:113px;height:1px;background:#c8c8c8"></div>
<div class="t" style="left:896px;top:105px;font-size:12px;;transform:scaleX(1.02);transform-origin:0 0">Project&gt;Model&gt;Hyd</div>
<div class="a" style="left:1px;top:119px;width:52px;height:16px;background:#f0f0f0"></div>
<div class="a" style="left:1px;top:135px;width:52px;height:1px;background:#6e6e6e"></div>
<div class="t" style="left:3px;top:122px;font-size:12px;;transform:scaleX(1.0);transform-origin:0 0">Info</div>
<div class="t" style="left:60px;top:122px;font-size:12px;;transform:scaleX(0.888);transform-origin:0 0">HYDRODYNAMIC DATA FOR STRUCTURE 4 COPIED FROM SPECIFIED .HYD FILE, STRUCTURE 4.</div>
<div class="a" style="left:55px;top:135px;width:836px;height:1px;background:#c8c8c8"></div>
<div class="a" style="left:893px;top:135px;width:113px;height:1px;background:#c8c8c8"></div>
<div class="t" style="left:896px;top:122px;font-size:12px;;transform:scaleX(1.02);transform-origin:0 0">Project&gt;Model&gt;Hyd</div>
<div class="a" style="left:1px;top:136px;width:52px;height:16px;background:#f0f0f0"></div>
<div class="a" style="left:1px;top:152px;width:52px;height:1px;background:#6e6e6e"></div>
<div class="t" style="left:3px;top:139px;font-size:12px;;transform:scaleX(1.0);transform-origin:0 0">Info</div>
<div class="t" style="left:60px;top:139px;font-size:12px;;transform:scaleX(0.888);transform-origin:0 0">HYDRODYNAMIC DATA FOR STRUCTURE 3 COPIED FROM SPECIFIED .HYD FILE, STRUCTURE 3.</div>
<div class="a" style="left:55px;top:152px;width:836px;height:1px;background:#c8c8c8"></div>
<div class="a" style="left:893px;top:152px;width:113px;height:1px;background:#c8c8c8"></div>
<div class="t" style="left:896px;top:139px;font-size:12px;;transform:scaleX(1.02);transform-origin:0 0">Project&gt;Model&gt;Hyd</div>
<div class="a" style="left:1px;top:153px;width:52px;height:16px;background:#f0f0f0"></div>
<div class="a" style="left:1px;top:169px;width:52px;height:1px;background:#6e6e6e"></div>
<div class="t" style="left:3px;top:156px;font-size:12px;;transform:scaleX(1.0);transform-origin:0 0">Info</div>
<div class="t" style="left:60px;top:156px;font-size:12px;;transform:scaleX(0.888);transform-origin:0 0">HYDRODYNAMIC DATA FOR STRUCTURE 2 COPIED FROM SPECIFIED .HYD FILE, STRUCTURE 2.</div>
<div class="a" style="left:55px;top:169px;width:836px;height:1px;background:#c8c8c8"></div>
<div class="a" style="left:893px;top:169px;width:113px;height:1px;background:#c8c8c8"></div>
<div class="t" style="left:896px;top:156px;font-size:12px;;transform:scaleX(1.02);transform-origin:0 0">Project&gt;Model&gt;Hyd</div>
<div class="a" style="left:1px;top:170px;width:52px;height:16px;background:#f0f0f0"></div>
<div class="a" style="left:1px;top:186px;width:52px;height:1px;background:#6e6e6e"></div>
<div class="t" style="left:3px;top:173px;font-size:12px;;transform:scaleX(1.0);transform-origin:0 0">Info</div>
<div class="t" style="left:60px;top:173px;font-size:12px;;transform:scaleX(0.888);transform-origin:0 0">HYDRODYNAMIC DATA FOR STRUCTURE 1 COPIED FROM SPECIFIED .HYD FILE, STRUCTURE 1.</div>
<div class="a" style="left:55px;top:186px;width:836px;height:1px;background:#c8c8c8"></div>
<div class="a" style="left:893px;top:186px;width:113px;height:1px;background:#c8c8c8"></div>
<div class="t" style="left:896px;top:173px;font-size:12px;;transform:scaleX(1.02);transform-origin:0 0">Project&gt;Model&gt;Hyd</div>
<div class="a" style="left:53px;top:-17px;width:1px;height:200px;background:#6e6e6e"></div>
<div class="a" style="left:891px;top:-17px;width:1px;height:200px;background:#c8c8c8"></div>
</div>
<div class="a" style="left:397px;top:469px;width:1px;height:199px;background:#6e6e6e"></div>
<div class="a" style="left:1235px;top:469px;width:1px;height:199px;background:#c8c8c8"></div>
<div class="a" style="left:1350px;top:469px;width:14px;height:199px;background:#f0f0f0"></div>
<div class="a" style="left:1350px;top:486px;width:14px;height:87px;background:#cdcdcd"></div>
<svg style="left:1353px;top:474px;" width="9" height="7" viewBox="0 0 9 7"><path d="M1 5L4.5 1.5L8 5" fill="none" stroke="#505050" stroke-width="2"/></svg>
<svg style="left:1353px;top:655px;" width="9" height="7" viewBox="0 0 9 7"><path d="M1 1L4.5 4.5L8 1" fill="none" stroke="#505050" stroke-width="2"/></svg>
<div class="a" style="left:344px;top:668px;width:1020px;height:15px;background:#f0f0f0"></div>
<div class="a" style="left:361px;top:668px;width:682px;height:15px;background:#cdcdcd"></div>
<svg style="left:350px;top:671px;" width="7" height="9" viewBox="0 0 7 9"><path d="M5 1L1.5 4.5L5 8" fill="none" stroke="#505050" stroke-width="2"/></svg>
<svg style="left:1337px;top:671px;" width="7" height="9" viewBox="0 0 7 9"><path d="M1 1L4.5 4.5L1 8" fill="none" stroke="#505050" stroke-width="2"/></svg>
<div class="a" style="left:344px;top:684px;width:1020px;height:17px;background:#f0f0f0"></div>
<svg style="left:344px;top:684px;" width="1020" height="17" viewBox="0 0 1020 17"><polygon points="65,0 133,0 125,16 72,16" fill="#f0f0f0"/><path d="M65.5 0.5L72.5 16M125.5 16L133.5 0.5" stroke="#000" stroke-width="1.1" fill="none"/><polygon points="126,0 187,0 179,16 133,16" fill="#f0f0f0"/><path d="M126.5 0.5L133.5 16M179.5 16L187.5 0.5" stroke="#000" stroke-width="1.1" fill="none"/><polygon points="0,0 72,0 64,16 7,16 0,16" fill="#fff"/><path d="M0.5 0.5L7.5 16M64.5 16L72.5 0.5" stroke="#000" stroke-width="1.1" fill="none"/><path d="M72 0.5H1020" stroke="#000" stroke-width="1"/><path d="M0 16.5H1020" stroke="#000" stroke-width="1"/><path d="M0.5 0V17" stroke="#000" stroke-width="1"/></svg>
<div class="t" style="left:355px;top:687px;font-size:12px;color:#000;font-weight:bold;transform:scaleX(0.932);transform-origin:0 0">Messages</div>
<div class="t" style="left:416px;top:687px;font-size:12px;color:#8c8c8c;;transform:scaleX(1.05);transform-origin:0 0">TimeLine</div>
<div class="t" style="left:480px;top:687px;font-size:12px;color:#8c8c8c;;transform:scaleX(1.07);transform-origin:0 0">Monitor</div>
<div class="a" style="left:0px;top:701px;width:1364px;height:4px;background:#f8f8f8"></div>
<div class="a" style="left:0px;top:705px;width:1364px;height:19px;background:#f0f0f0"></div>
<div class="a" style="left:0px;top:705px;width:954px;height:1px;background:#a0a0a0"></div>
<div class="a" style="left:0px;top:705px;width:1px;height:19px;background:#a0a0a0"></div>
<div class="t" style="left:2px;top:709px;font-size:12px;;transform:scaleX(0.942);transform-origin:0 0">Press F1 for Help</div>
<div class="a" style="left:954px;top:705px;width:1px;height:19px;background:#fff"></div>
<div class="a" style="left:958px;top:705px;width:1px;height:19px;background:#a0a0a0"></div>
<div class="a" style="left:958px;top:705px;width:406px;height:1px;background:#a0a0a0"></div>
<div class="t" style="left:963px;top:709px;font-size:12px;">Length: m</div>
<div class="t" style="left:1035px;top:709px;font-size:12px;">Mass: kg</div>
<div class="t" style="left:1099px;top:709px;font-size:12px;">Force: N</div>
<div class="t" style="left:1161px;top:709px;font-size:12px;">Angle: °</div>
<div class="t" style="left:1221px;top:709px;font-size:12px;">Frequency: rad/s</div>
<svg style="left:1350px;top:711px;" width="13" height="12" viewBox="0 0 13 12"><path d="M12 2L2 12M12 6L6 12M12 10L10 12" stroke="#a0a0a0" stroke-width="1"/></svg>
</body></html>
